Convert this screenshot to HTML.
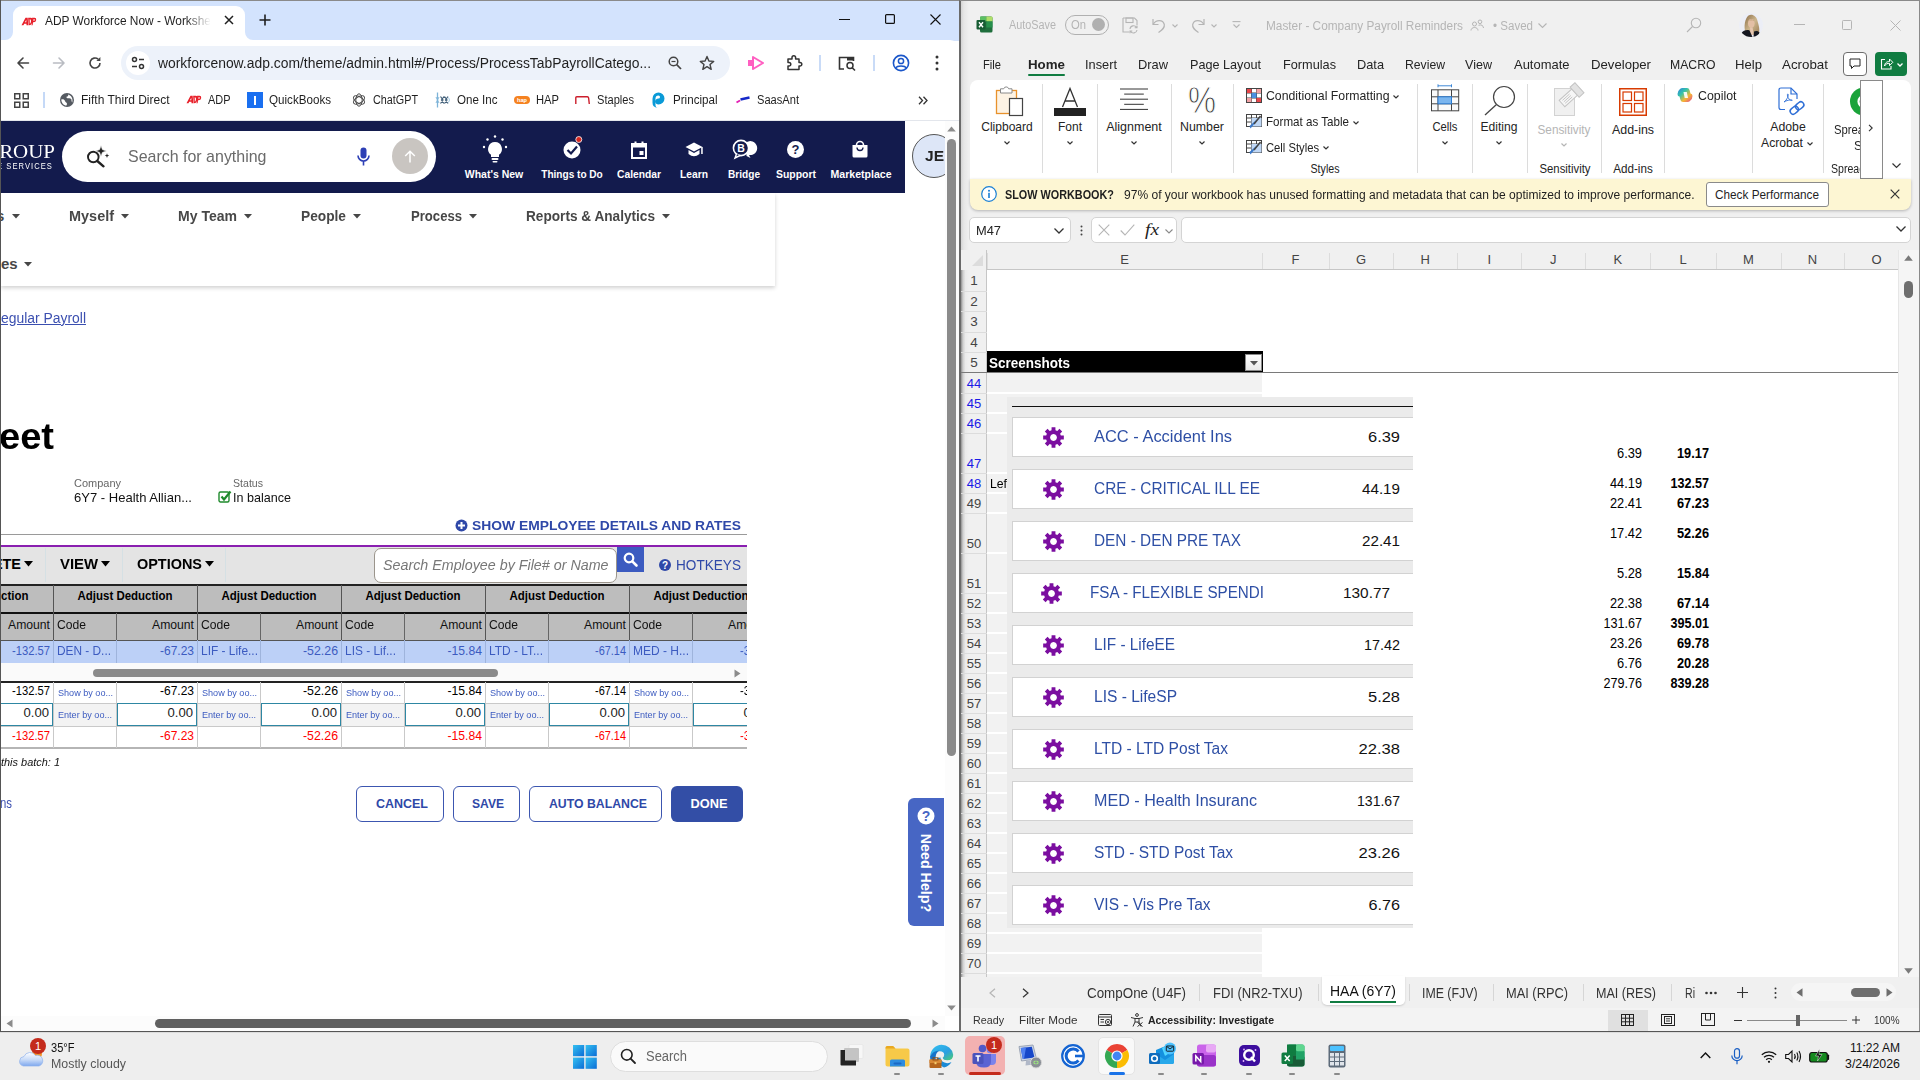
<!DOCTYPE html>
<html><head><meta charset="utf-8"><title>ADP Workforce Now - Worksheet</title>
<style>
html,body{margin:0;padding:0;}
body{width:1920px;height:1080px;overflow:hidden;position:relative;background:#fff;font-family:"Liberation Sans",sans-serif;}
.a{position:absolute;box-sizing:border-box;}
.t{position:absolute;white-space:nowrap;display:inline-block;}
svg{overflow:visible;}
</style></head><body>
<div class="a" style="left:0px;top:0px;width:960px;height:41px;background:#d3e3fd;"></div>
<div class="a" style="left:13px;top:6px;width:232px;height:35px;background:#fff;border-radius:9px 9px 0 0;"></div>
<svg class="a" style="left:5px;top:32px;" width="8" height="8" viewBox="0 0 8 8"><path d="M8 0 V8 H0 A8 8 0 0 0 8 0Z" fill="#fff"/></svg>
<svg class="a" style="left:245px;top:32px;" width="8" height="8" viewBox="0 0 8 8"><path d="M0 0 V8 H8 A8 8 0 0 1 0 0Z" fill="#fff"/></svg>
<div class="a" style="left:0px;top:40px;width:958.5px;height:44px;background:#fff;border-radius:0 9px 0 0;"></div>
<div class="a" style="left:0px;top:84px;width:960px;height:36px;background:#fff;"></div>
<div class="a" style="left:0px;top:120px;width:960px;height:1px;background:#e3e6ec;"></div>
<svg class="a" style="left:21px;top:16.6px;" width="16" height="8.8" viewBox="0 0 18 10"><path d="M0.5 9.5 L5 0.8 H7.5 L8.2 9.5 H6.2 L6.1 7.6 H3.6 L2.7 9.5 Z M4.4 6 H6 L5.9 3 Z" fill="#e8202a" fill-rule="evenodd"/><path d="M8 0.8 H11 Q13.6 0.8 13 4.5 Q12.4 9.5 9 9.5 H8.6 Z M9.8 2.6 L9.9 7.7 Q11 7.5 11.3 4.8 Q11.6 2.6 9.8 2.6Z" fill="#e8202a" fill-rule="evenodd"/><path d="M12.5 0.8 H15.2 Q17.6 0.8 17.2 3.3 Q16.8 5.9 14.3 5.9 H13.6 L13.1 9.5 H11.6 L12.4 8 Z M14.3 2.4 L13.9 4.3 Q15.4 4.4 15.6 3.3 Q15.7 2.4 14.3 2.4Z" fill="#e8202a" fill-rule="evenodd"/></svg>
<span class="t" style="left:45px;top:12.5px;font-size:12px;line-height:16px;color:#1f1f1f;transform:scaleX(0.9917);transform-origin:0 50%;-webkit-mask-image:linear-gradient(90deg,#000 85%,transparent 100%);mask-image:linear-gradient(90deg,#000 85%,transparent 100%);">ADP Workforce Now - Workshe</span>
<svg class="a" style="left:224px;top:15px;" width="10" height="10" viewBox="0 0 10 10"><path d="M1 1 L9 9 M9 1 L1 9" stroke="#1f1f1f" stroke-width="1.5" fill="none"/></svg>
<svg class="a" style="left:259px;top:14px;" width="12" height="12" viewBox="0 0 12 12"><path d="M6 0.5 V11.5 M0.5 6 H11.5" stroke="#1f1f1f" stroke-width="1.6" fill="none"/></svg>
<svg class="a" style="left:839px;top:19px;" width="11" height="1" viewBox="0 0 11 1"><rect width="11" height="1" fill="#111"/></svg>
<svg class="a" style="left:885px;top:14px;" width="10" height="10" viewBox="0 0 10 10"><rect x="0.6" y="0.6" width="8.8" height="8.8" rx="1" fill="none" stroke="#111" stroke-width="1.2"/></svg>
<svg class="a" style="left:930px;top:14px;" width="11" height="11" viewBox="0 0 11 11"><path d="M0.5 0.5 L10.5 10.5 M10.5 0.5 L0.5 10.5" stroke="#111" stroke-width="1.1" fill="none"/></svg>
<svg class="a" style="left:17px;top:57px;" width="12" height="12" viewBox="0 0 12 12"><path d="M11.5 6 H1.2 M6 1 L1 6 L6 11" stroke="#444" stroke-width="1.6" fill="none" stroke-linecap="round" stroke-linejoin="round"/></svg>
<svg class="a" style="left:53px;top:57px;" width="12" height="12" viewBox="0 0 12 12"><path d="M0.5 6 H10.8 M6 1 L11 6 L6 11" stroke="#b9bcc2" stroke-width="1.6" fill="none" stroke-linecap="round" stroke-linejoin="round"/></svg>
<svg class="a" style="left:88px;top:56px;" width="14" height="14" viewBox="0 0 14 14"><path d="M12 7 A5 5 0 1 1 10.2 3.2" stroke="#444" stroke-width="1.6" fill="none"/><path d="M12.4 1 V5 H8.4 Z" fill="#444"/></svg>
<div class="a" style="left:121px;top:46px;width:609px;height:34px;background:#edf2fa;border-radius:17px;"></div>
<div class="a" style="left:126px;top:51px;width:24px;height:24px;background:#fff;border-radius:12px;"></div>
<svg class="a" style="left:131px;top:56px;" width="14" height="14" viewBox="0 0 14 14"><circle cx="3.5" cy="3.5" r="2" fill="none" stroke="#333" stroke-width="1.5"/><path d="M8 3.5 H13" stroke="#333" stroke-width="1.5"/><circle cx="10.5" cy="10.5" r="2" fill="none" stroke="#333" stroke-width="1.5"/><path d="M1 10.5 H6" stroke="#333" stroke-width="1.5"/></svg>
<span class="t" style="left:158px;top:54.0px;font-size:14px;line-height:18px;color:#1f1f1f;transform:scaleX(0.9915);transform-origin:0 50%;">workforcenow.adp.com/theme/admin.html#/Process/ProcessTabPayrollCatego...</span>
<svg class="a" style="left:668px;top:56px;" width="14" height="14" viewBox="0 0 14 14"><circle cx="5.5" cy="5.5" r="4.3" fill="none" stroke="#444" stroke-width="1.5"/><path d="M8.7 8.7 L13 13" stroke="#444" stroke-width="1.7"/><path d="M3.5 5.5 H7.5" stroke="#444" stroke-width="1.2"/></svg>
<svg class="a" style="left:699px;top:55px;" width="16" height="16" viewBox="0 0 16 16"><path d="M8 1.5 L9.9 6 L14.7 6.4 L11 9.5 L12.2 14.3 L8 11.7 L3.8 14.3 L5 9.5 L1.3 6.4 L6.1 6 Z" fill="none" stroke="#444" stroke-width="1.4" stroke-linejoin="round"/></svg>
<svg class="a" style="left:748px;top:56px;" width="17" height="14" viewBox="0 0 17 14"><rect x="0" y="4" width="5" height="6" fill="#ff5fc1"/><path d="M5 1 L15 7 L5 13 Z" fill="none" stroke="#ff5fc1" stroke-width="2" stroke-linejoin="round"/></svg>
<svg class="a" style="left:786px;top:55px;" width="16" height="16" viewBox="0 0 16 16"><path d="M6 2.5 a1.8 1.8 0 0 1 3.6 0 V4 H13 V7.5 h1 a1.8 1.8 0 0 1 0 3.6 h-1 V14.5 H2 V11 h1 a1.8 1.8 0 0 0 0-3.6 H2 V4 H6 Z" fill="none" stroke="#333" stroke-width="1.5" stroke-linejoin="round"/></svg>
<div class="a" style="left:818.5px;top:55px;width:2px;height:16px;background:#c9dbf7;"></div>
<svg class="a" style="left:838px;top:56px;" width="18" height="15" viewBox="0 0 18 15"><path d="M6 13 H1.5 V1.5 H15.5 V5" fill="none" stroke="#333" stroke-width="1.6"/><rect x="9" y="1" width="7" height="3.5" fill="#333"/><circle cx="12" cy="9.5" r="3" fill="none" stroke="#333" stroke-width="1.5"/><path d="M14.2 11.7 L17 14.5" stroke="#333" stroke-width="1.6"/></svg>
<div class="a" style="left:873px;top:55px;width:2px;height:16px;background:#c9dbf7;"></div>
<svg class="a" style="left:892px;top:54px;" width="18" height="18" viewBox="0 0 18 18"><circle cx="9" cy="9" r="7.6" fill="none" stroke="#1a56c9" stroke-width="1.6"/><circle cx="9" cy="7" r="2.6" fill="none" stroke="#1a56c9" stroke-width="1.5"/><path d="M3.8 14 C5 11.3 13 11.3 14.2 14" fill="none" stroke="#1a56c9" stroke-width="1.5"/></svg>
<svg class="a" style="left:935px;top:55px;" width="4" height="16" viewBox="0 0 4 16"><circle cx="2" cy="2" r="1.5" fill="#333"/><circle cx="2" cy="8" r="1.5" fill="#333"/><circle cx="2" cy="14" r="1.5" fill="#333"/></svg>
<svg class="a" style="left:14px;top:93px;" width="15" height="15" viewBox="0 0 15 15"><rect x="0.75" y="0.75" width="5" height="5" fill="none" stroke="#444" stroke-width="1.5"/><rect x="9.25" y="0.75" width="5" height="5" fill="none" stroke="#444" stroke-width="1.5"/><rect x="0.75" y="9.25" width="5" height="5" fill="none" stroke="#444" stroke-width="1.5"/><rect x="9.25" y="9.25" width="5" height="5" fill="none" stroke="#444" stroke-width="1.5"/></svg>
<div class="a" style="left:43px;top:92px;width:2px;height:16px;background:#c5d9f7;"></div>
<svg class="a" style="left:60px;top:93px;" width="14" height="14" viewBox="0 0 14 14"><circle cx="7" cy="7" r="7" fill="#555a61"/><path d="M1.3 6.5 C3 6 4.5 6.5 5 8 C5.5 9.5 7 9.5 7 11 L6.5 12.6 C3.5 12.3 1.3 9.8 1.3 6.5 Z" fill="#fff"/><path d="M8.2 1.4 C8.5 3 7.5 3.5 6.5 3.8 C6 5 7.5 5.5 9 5.2 C10.5 5 12 6 11.5 8 L12.2 9.5 C13 7 12.5 3 8.2 1.4Z" fill="#fff"/></svg>
<span class="t" style="left:81px;top:92.0px;font-size:12px;line-height:16px;color:#1f1f1f;transform:scaleX(1.0004);transform-origin:0 50%;">Fifth Third Direct</span>
<svg class="a" style="left:186px;top:95.1px;" width="16" height="8.8" viewBox="0 0 18 10"><path d="M0.5 9.5 L5 0.8 H7.5 L8.2 9.5 H6.2 L6.1 7.6 H3.6 L2.7 9.5 Z M4.4 6 H6 L5.9 3 Z" fill="#e8202a" fill-rule="evenodd"/><path d="M8 0.8 H11 Q13.6 0.8 13 4.5 Q12.4 9.5 9 9.5 H8.6 Z M9.8 2.6 L9.9 7.7 Q11 7.5 11.3 4.8 Q11.6 2.6 9.8 2.6Z" fill="#e8202a" fill-rule="evenodd"/><path d="M12.5 0.8 H15.2 Q17.6 0.8 17.2 3.3 Q16.8 5.9 14.3 5.9 H13.6 L13.1 9.5 H11.6 L12.4 8 Z M14.3 2.4 L13.9 4.3 Q15.4 4.4 15.6 3.3 Q15.7 2.4 14.3 2.4Z" fill="#e8202a" fill-rule="evenodd"/></svg>
<span class="t" style="left:208px;top:92.0px;font-size:12px;line-height:16px;color:#1f1f1f;transform:scaleX(0.9114);transform-origin:0 50%;">ADP</span>
<div class="a" style="left:247px;top:92px;width:15.5px;height:16px;background:#1a6ff0;"></div>
<div class="a" style="left:253.5px;top:95.5px;width:2.5px;height:9px;background:#fff;"></div>
<span class="t" style="left:269px;top:92.0px;font-size:12px;line-height:16px;color:#1f1f1f;transform:scaleX(0.9683);transform-origin:0 50%;">QuickBooks</span>
<svg class="a" style="left:352px;top:93px;" width="14" height="14" viewBox="0 0 14 14"><g fill="none" stroke="#4a4a4a" stroke-width="1"><ellipse cx="7" cy="7" rx="3.2" ry="6.2"/><ellipse cx="7" cy="7" rx="3.2" ry="6.2" transform="rotate(60 7 7)"/><ellipse cx="7" cy="7" rx="3.2" ry="6.2" transform="rotate(120 7 7)"/></g></svg>
<span class="t" style="left:373px;top:92.0px;font-size:12px;line-height:16px;color:#1f1f1f;transform:scaleX(0.8997);transform-origin:0 50%;">ChatGPT</span>
<svg class="a" style="left:435px;top:92px;" width="15" height="16" viewBox="0 0 15 16"><path d="M2.5 0.5 V15.5" stroke="#7db3d8" stroke-width="1.3" fill="none"/><path d="M1 5 L2.5 8 L1 11 M4 5 L2.5 8 L4 11" stroke="#7db3d8" stroke-width="0.9" fill="none"/><path d="M5.5 4.5 L8 8 L5.5 11.5 M9 4.5 L6.5 8 L9 11.5 M9.5 4.5 L12 8 L9.5 11.5 M13 4.5 L10.5 8 L13 11.5" stroke="#44617a" stroke-width="1.2" fill="none"/><path d="M13.5 5.5 L14.5 8 L13.5 10.5" stroke="#9cc6e3" stroke-width="0.9" fill="none"/></svg>
<span class="t" style="left:457px;top:92.0px;font-size:12px;line-height:16px;color:#1f1f1f;transform:scaleX(0.9636);transform-origin:0 50%;">One Inc</span>
<div class="a" style="left:514px;top:96px;width:16px;height:8px;background:#f58220;border-radius:4px;"></div>
<span class="t" style="left:522px;top:96.0px;font-size:6px;line-height:8px;color:#fff;font-weight:700;transform:translateX(-50%) scaleX(0.9370);transform-origin:50% 50%;">hap</span>
<span class="t" style="left:536px;top:92.0px;font-size:12px;line-height:16px;color:#1f1f1f;transform:scaleX(0.9316);transform-origin:0 50%;">HAP</span>
<svg class="a" style="left:575px;top:96px;" width="15" height="8" viewBox="0 0 15 8"><path d="M0.8 8 V1.8 Q0.8 0.8 1.8 0.8 H12.4 Q13.4 0.8 13.6 1.8 L14.3 8" fill="none" stroke="#cc1f2d" stroke-width="1.4"/></svg>
<span class="t" style="left:597px;top:92.0px;font-size:12px;line-height:16px;color:#1f1f1f;transform:scaleX(0.9243);transform-origin:0 50%;">Staples</span>
<svg class="a" style="left:652px;top:92px;" width="13" height="16" viewBox="0 0 13 16"><path d="M6.5 0.5 a6 6 0 0 1 0 12 a3 3 0 0 1 0 -6 a1.5 1.5 0 0 0 0 -3 a3 3 0 0 0 -3 3 v7 q0 2 2 2.2 q-5 -0.5 -5 -5 v-4 a6 6 0 0 1 6 -6.2z" fill="#0a9ad7"/></svg>
<span class="t" style="left:673px;top:92.0px;font-size:12px;line-height:16px;color:#1f1f1f;transform:scaleX(0.9667);transform-origin:0 50%;">Principal</span>
<svg class="a" style="left:736px;top:96px;" width="14" height="8" viewBox="0 0 14 8"><path d="M0.5 6.5 L4 4.5" stroke="#e31fb4" stroke-width="2"/><path d="M4.5 3.5 L13.5 1.5" stroke="#1528c9" stroke-width="2.4"/></svg>
<span class="t" style="left:757px;top:92.0px;font-size:12px;line-height:16px;color:#1f1f1f;transform:scaleX(0.9256);transform-origin:0 50%;">SaasAnt</span>
<svg class="a" style="left:918px;top:96px;" width="10" height="9" viewBox="0 0 10 9"><path d="M1 0.8 L4.5 4.5 L1 8.2 M5.5 0.8 L9 4.5 L5.5 8.2" stroke="#333" stroke-width="1.3" fill="none"/></svg>
<div class="a" style="left:1px;top:121px;width:904px;height:72px;background:#131b4d;"></div>
<div class="a" style="left:905px;top:121px;width:40px;height:72px;background:#fff;overflow:hidden;">
<div class="a" style="left:6.5px;top:13px;width:44px;height:44px;border-radius:22px;background:#dde6f7;border:1px solid #555;"></div>
</div>
<span class="t" style="left:924.5px;top:147.0px;font-size:14px;line-height:18px;color:#222;font-weight:700;transform:scaleX(1.1095);transform-origin:0 50%;">JE</span>
<span class="t" style="left:-16px;top:138.5px;font-size:19px;line-height:25px;color:#fff;font-family:'Liberation Serif',serif;transform:scaleX(1.1024);transform-origin:0 50%;">GROUP</span>
<span class="t" style="left:-3px;top:161.0px;font-size:8.5px;line-height:11px;color:#fff;transform:scaleX(0.8907);transform-origin:0 50%;letter-spacing:1.2px;">E SERVICES</span>
<div class="a" style="left:62px;top:131px;width:374px;height:51px;background:#fff;border-radius:26px;"></div>
<svg class="a" style="left:84px;top:143px;" width="26" height="26" viewBox="0 0 26 26"><circle cx="9.3" cy="14" r="5.3" fill="none" stroke="#222" stroke-width="1.9"/><path d="M13.3 18 L19.5 23.3" stroke="#222" stroke-width="2.4" stroke-linecap="round"/><path d="M17 2.5 L18.4 6.6 L22.5 8 L18.4 9.4 L17 13.5 L15.6 9.4 L11.5 8 L15.6 6.6 Z" fill="#222" stroke="#fff" stroke-width="0.6"/><path d="M23 10.3 L23.6 12 L25.3 12.6 L23.6 13.2 L23 14.9 L22.4 13.2 L20.7 12.6 L22.4 12Z" fill="#222"/></svg>
<span class="t" style="left:127.5px;top:146.0px;font-size:17px;line-height:22px;color:#6a6a6a;transform:scaleX(0.9395);transform-origin:0 50%;">Search for anything</span>
<svg class="a" style="left:357px;top:147px;" width="13" height="20" viewBox="0 0 13 20"><rect x="3.5" y="0.5" width="6" height="11" rx="3" fill="#2d3fb5"/><path d="M1 8.5 a5.5 5.5 0 0 0 11 0" fill="none" stroke="#2d3fb5" stroke-width="1.6"/><path d="M6.5 14 V18.5" stroke="#2d3fb5" stroke-width="1.6"/></svg>
<div class="a" style="left:392px;top:138px;width:36px;height:36px;background:#c9c5c1;border-radius:18px;"></div>
<svg class="a" style="left:404px;top:150px;" width="12" height="13" viewBox="0 0 12 13"><path d="M6 12.5 V1.5 M1.2 6 L6 1.2 L10.8 6" stroke="#fff" stroke-width="1.5" fill="none"/></svg>
<svg class="a" style="left:481px;top:134px;" width="28" height="32" viewBox="0 0 28 32"><path d="M14 8 a7 7 0 0 1 4 12.7 V23 H10 V20.7 A7 7 0 0 1 14 8Z" fill="#fff"/><rect x="10.5" y="24" width="7" height="2" rx="1" fill="#fff"/><rect x="11.5" y="27" width="5" height="1.6" rx="0.8" fill="#fff"/><g fill="#fff"><circle cx="14" cy="2.5" r="1.2"/><circle cx="6.5" cy="5.5" r="1.2"/><circle cx="21.5" cy="5.5" r="1.2"/><circle cx="3" cy="13" r="1.2"/><circle cx="25" cy="13" r="1.2"/></g></svg>
<span class="t" style="left:494px;top:167.0px;font-size:11px;line-height:14px;color:#fff;font-weight:700;transform:translateX(-50%) scaleX(0.9544);transform-origin:50% 50%;">What&#39;s New</span>
<svg class="a" style="left:563px;top:135px;" width="24" height="24" viewBox="0 0 24 24"><circle cx="9" cy="15" r="8.5" fill="#fff"/><path d="M4.5 15 L8 18.5 L14 11.5" stroke="#131b4d" stroke-width="2.2" fill="none"/><circle cx="15.8" cy="4.5" r="3" fill="#d8281f" stroke="#fff" stroke-width="0.8"/></svg>
<span class="t" style="left:572px;top:167.0px;font-size:11px;line-height:14px;color:#fff;font-weight:700;transform:translateX(-50%) scaleX(0.9149);transform-origin:50% 50%;">Things to Do</span>
<svg class="a" style="left:631px;top:141px;" width="16" height="18" viewBox="0 0 16 18"><path d="M1 3 H15 V17 H1Z" fill="none" stroke="#fff" stroke-width="2"/><rect x="1" y="3" width="14" height="3.5" fill="#fff"/><rect x="3.5" y="0.5" width="2" height="3" fill="#fff"/><rect x="10.5" y="0.5" width="2" height="3" fill="#fff"/><rect x="8.5" y="10" width="4" height="4" fill="#fff"/></svg>
<span class="t" style="left:639px;top:167.0px;font-size:11px;line-height:14px;color:#fff;font-weight:700;transform:translateX(-50%) scaleX(0.9346);transform-origin:50% 50%;">Calendar</span>
<svg class="a" style="left:685px;top:142px;" width="18" height="16" viewBox="0 0 18 16"><path d="M9 0.5 L0.5 5 L9 9.5 L17.5 5Z" fill="#fff"/><path d="M3.5 8 V12 Q9 16.5 14.5 12 V8 L9 11Z" fill="#fff"/><rect x="16.2" y="5" width="1.5" height="7" fill="#fff"/></svg>
<span class="t" style="left:693.5px;top:167.0px;font-size:11px;line-height:14px;color:#fff;font-weight:700;transform:translateX(-50%) scaleX(0.9343);transform-origin:50% 50%;">Learn</span>
<svg class="a" style="left:732px;top:139px;" width="24" height="20" viewBox="0 0 24 20"><path d="M14 3.5 a7 7 0 1 1 3 12.5 l1.5 3 l-4 -2" fill="#fff"/><circle cx="9" cy="9" r="7.6" fill="#131b4d" stroke="#fff" stroke-width="1.6"/><path d="M4.5 15 L3 19 L8 16.5" fill="#131b4d" stroke="#fff" stroke-width="1.4"/><text x="9" y="13" font-size="10.5" font-weight="700" fill="#fff" text-anchor="middle" font-family="Liberation Sans,sans-serif">B</text></svg>
<span class="t" style="left:744px;top:167.0px;font-size:11px;line-height:14px;color:#fff;font-weight:700;transform:translateX(-50%) scaleX(0.9184);transform-origin:50% 50%;">Bridge</span>
<svg class="a" style="left:787px;top:141px;" width="17" height="17" viewBox="0 0 17 17"><circle cx="8.5" cy="8.5" r="8.5" fill="#fff"/><text x="8.5" y="13" font-size="13" font-weight="700" fill="#131b4d" text-anchor="middle" font-family="Liberation Sans,sans-serif">?</text></svg>
<span class="t" style="left:796px;top:167.0px;font-size:11px;line-height:14px;color:#fff;font-weight:700;transform:translateX(-50%) scaleX(0.9485);transform-origin:50% 50%;">Support</span>
<svg class="a" style="left:852px;top:140px;" width="16" height="18" viewBox="0 0 16 18"><path d="M0.5 5 H15.5 V16 Q15.5 17.5 14 17.5 H2 Q0.5 17.5 0.5 16Z" fill="#fff"/><path d="M4.5 5 a3.5 3.5 0 0 1 7 0" fill="none" stroke="#fff" stroke-width="1.6"/><path d="M5 7.5 a3 3 0 0 0 6 0" fill="none" stroke="#131b4d" stroke-width="1.3"/></svg>
<span class="t" style="left:860.5px;top:167.0px;font-size:11px;line-height:14px;color:#fff;font-weight:700;transform:translateX(-50%) scaleX(0.9592);transform-origin:50% 50%;">Marketplace</span>
<div class="a" style="left:945px;top:121px;width:14px;height:895px;background:#fcfcfc;"></div>
<svg class="a" style="left:947px;top:126px;" width="9" height="6" viewBox="0 0 9 6"><path d="M4.5 0.5 L8.8 5.5 H0.2Z" fill="#8b8b8b"/></svg>
<div class="a" style="left:947px;top:139px;width:9px;height:617px;background:#8b8b8b;border-radius:4.5px;"></div>
<svg class="a" style="left:947px;top:1005px;" width="9" height="6" viewBox="0 0 9 6"><path d="M4.5 5.5 L8.8 0.5 H0.2Z" fill="#8b8b8b"/></svg>
<div class="a" style="left:1px;top:193px;width:774px;height:93px;background:#fff;box-shadow:0 2px 4px rgba(0,0,0,0.18);"></div>
<span class="t" style="left:-4px;top:206.0px;font-size:15px;line-height:20px;color:#474747;font-weight:700;">s</span>
<svg class="a" style="left:12px;top:214px;" width="8" height="5" viewBox="0 0 8 5"><path d="M0 0 H8 L4 4.5Z" fill="#474747"/></svg>
<span class="t" style="left:69px;top:206.0px;font-size:15px;line-height:20px;color:#474747;font-weight:700;transform:scaleX(0.9639);transform-origin:0 50%;">Myself</span>
<svg class="a" style="left:121px;top:214px;" width="8" height="5" viewBox="0 0 8 5"><path d="M0 0 H8 L4 4.5Z" fill="#474747"/></svg>
<span class="t" style="left:177.5px;top:206.0px;font-size:15px;line-height:20px;color:#474747;font-weight:700;transform:scaleX(0.9353);transform-origin:0 50%;">My Team</span>
<svg class="a" style="left:243.5px;top:214px;" width="8" height="5" viewBox="0 0 8 5"><path d="M0 0 H8 L4 4.5Z" fill="#474747"/></svg>
<span class="t" style="left:301px;top:206.0px;font-size:15px;line-height:20px;color:#474747;font-weight:700;transform:scaleX(0.9149);transform-origin:0 50%;">People</span>
<svg class="a" style="left:353px;top:214px;" width="8" height="5" viewBox="0 0 8 5"><path d="M0 0 H8 L4 4.5Z" fill="#474747"/></svg>
<span class="t" style="left:411px;top:206.0px;font-size:15px;line-height:20px;color:#474747;font-weight:700;transform:scaleX(0.8737);transform-origin:0 50%;">Process</span>
<svg class="a" style="left:469px;top:214px;" width="8" height="5" viewBox="0 0 8 5"><path d="M0 0 H8 L4 4.5Z" fill="#474747"/></svg>
<span class="t" style="left:526px;top:206.0px;font-size:15px;line-height:20px;color:#474747;font-weight:700;transform:scaleX(0.9086);transform-origin:0 50%;">Reports &amp; Analytics</span>
<svg class="a" style="left:662px;top:214px;" width="8" height="5" viewBox="0 0 8 5"><path d="M0 0 H8 L4 4.5Z" fill="#474747"/></svg>
<span class="t" style="left:1px;top:254.0px;font-size:15px;line-height:20px;color:#474747;font-weight:700;">es</span>
<svg class="a" style="left:24px;top:262px;" width="8" height="5" viewBox="0 0 8 5"><path d="M0 0 H8 L4 4.5Z" fill="#474747"/></svg>
<span class="t" style="left:1px;top:309.0px;font-size:14px;line-height:18px;color:#3b4fb0;transform:scaleX(0.9929);transform-origin:0 50%;text-decoration:underline;">egular Payroll</span>
<span class="t" style="left:-1px;top:412.0px;font-size:37px;line-height:50px;color:#000;font-weight:700;transform:scaleX(1.0283);transform-origin:0 50%;">eet</span>
<span class="t" style="left:74px;top:476.0px;font-size:11px;line-height:14px;color:#666;transform:scaleX(0.9983);transform-origin:0 50%;">Company</span>
<span class="t" style="left:74px;top:489.0px;font-size:13px;line-height:17px;color:#111;transform:scaleX(1.0017);transform-origin:0 50%;">6Y7 - Health Allian...</span>
<span class="t" style="left:232.5px;top:476.0px;font-size:11px;line-height:14px;color:#666;transform:scaleX(0.9619);transform-origin:0 50%;">Status</span>
<span class="t" style="left:232.5px;top:489.0px;font-size:13px;line-height:17px;color:#111;transform:scaleX(0.9667);transform-origin:0 50%;">In balance</span>
<svg class="a" style="left:218px;top:490px;" width="14" height="13" viewBox="0 0 14 13"><rect x="1" y="2" width="10" height="10" rx="1.5" fill="#fff" stroke="#1f8a2c" stroke-width="1.4"/><path d="M3.5 6.5 L6 9.5 L12.5 1.5" stroke="#1f8a2c" stroke-width="2.2" fill="none"/></svg>
<svg class="a" style="left:455px;top:519px;" width="13" height="13" viewBox="0 0 13 13"><circle cx="6.5" cy="6.5" r="6" fill="#2f48a8"/><path d="M6.5 3 V10 M3 6.5 H10" stroke="#fff" stroke-width="2"/></svg>
<span class="t" style="left:472px;top:517.0px;font-size:13px;line-height:17px;color:#2f48a8;font-weight:700;transform:scaleX(1.0651);transform-origin:0 50%;">SHOW EMPLOYEE DETAILS AND RATES</span>
<div class="a" style="left:1px;top:534px;width:746px;height:1px;background:#9a9a9a;"></div>
<div class="a" style="left:1px;top:545px;width:746px;height:2px;background:#8a1fb0;"></div>
<div class="a" style="left:1px;top:547px;width:746px;height:37px;background:#e4e4e4;"></div>
<div class="a" style="left:45px;top:548px;width:1px;height:34px;background:#d5e0e4;"></div>
<div class="a" style="left:122px;top:548px;width:1px;height:34px;background:#d5e0e4;"></div>
<div class="a" style="left:225px;top:548px;width:1px;height:34px;background:#d5e0e4;"></div>
<span class="t" style="left:20.5px;top:554.0px;font-size:15px;line-height:20px;color:#000;font-weight:700;transform:translateX(-100%) scaleX(0.9630);transform-origin:100% 50%;">DELETE</span>
<svg class="a" style="left:23.5px;top:561px;" width="9" height="6" viewBox="0 0 9 6"><path d="M0 0 H9 L4.5 5.5Z" fill="#000"/></svg>
<span class="t" style="left:60px;top:554.0px;font-size:15px;line-height:20px;color:#000;font-weight:700;transform:scaleX(0.9910);transform-origin:0 50%;">VIEW</span>
<svg class="a" style="left:101px;top:561px;" width="9" height="6" viewBox="0 0 9 6"><path d="M0 0 H9 L4.5 5.5Z" fill="#000"/></svg>
<span class="t" style="left:137px;top:554.0px;font-size:15px;line-height:20px;color:#000;font-weight:700;transform:scaleX(0.9627);transform-origin:0 50%;">OPTIONS</span>
<svg class="a" style="left:205px;top:561px;" width="9" height="6" viewBox="0 0 9 6"><path d="M0 0 H9 L4.5 5.5Z" fill="#000"/></svg>
<div class="a" style="left:374px;top:548px;width:243px;height:35px;background:#fff;border:1px solid #9b958c;border-radius:7px;"></div>
<span class="t" style="left:382.5px;top:555.0px;font-size:15px;line-height:20px;color:#777;font-style:italic;transform:scaleX(0.9524);transform-origin:0 50%;">Search Employee by File# or Name</span>
<div class="a" style="left:617px;top:547px;width:27px;height:25px;background:#3c5bc0;"></div>
<svg class="a" style="left:623px;top:552px;" width="15" height="15" viewBox="0 0 15 15"><circle cx="6" cy="6" r="4.3" fill="none" stroke="#fff" stroke-width="2.2"/><path d="M9.3 9.3 L13.5 13.5" stroke="#fff" stroke-width="2.6" stroke-linecap="round"/></svg>
<svg class="a" style="left:659px;top:559px;" width="12" height="12" viewBox="0 0 12 12"><circle cx="6" cy="6" r="6" fill="#2f48a8"/><text x="6" y="9.6" font-size="10" font-weight="700" fill="#fff" text-anchor="middle" font-family="Liberation Sans,sans-serif">?</text></svg>
<span class="t" style="left:676px;top:555.0px;font-size:15px;line-height:20px;color:#2f48a8;transform:scaleX(0.9067);transform-origin:0 50%;">HOTKEYS</span>
<div class="a" style="left:1px;top:584px;width:746px;height:165px;overflow:hidden;">
<div class="a" style="left:-1px;top:0px;width:748px;height:56px;background:#bdbdbd;"></div>
<div class="a" style="left:-1px;top:0px;width:748px;height:1.5px;background:#222;"></div>
<div class="a" style="left:-1px;top:27.5px;width:748px;height:2px;background:#111;"></div>
<div class="a" style="left:-1px;top:55.5px;width:748px;height:1px;background:#555;"></div>
<div class="a" style="left:-1px;top:56.5px;width:748px;height:22.5px;background:#bcd0f7;"></div>
<div class="a" style="left:-1px;top:79px;width:748px;height:18px;background:#fafafa;"></div>
<div class="a" style="left:-1px;top:97px;width:748px;height:1.5px;background:#222;"></div>
<div class="a" style="left:-1px;top:98.5px;width:748px;height:65px;background:#fff;"></div>
<div class="a" style="left:-1px;top:118.5px;width:748px;height:1px;background:#c9c9c9;"></div>
<div class="a" style="left:-1px;top:141.5px;width:748px;height:1px;background:#c9c9c9;"></div>
<div class="a" style="left:-1px;top:163px;width:748px;height:1.5px;background:#b5b5b5;"></div>
<div class="a" style="left:92px;top:85px;width:405px;height:8px;background:#8b8b8b;border-radius:4px;"></div>
<svg class="a" style="left:733px;top:85px" width="7" height="9" viewBox="0 0 7 9"><path d="M0.5 0.5 L6.5 4.5 L0.5 8.5Z" fill="#8b8b8b"/></svg>
<div class="a" style="left:-92px;top:1px;width:1px;height:55px;background:#555;"></div>
<div class="a" style="left:-29px;top:29px;width:1px;height:27px;background:#666;"></div>
<div class="a" style="left:-92px;top:56px;width:1px;height:23px;background:#9fb4dc;"></div>
<div class="a" style="left:-29px;top:56px;width:1px;height:23px;background:#9fb4dc;"></div>
<div class="a" style="left:-92px;top:98px;width:1px;height:66px;background:#c9c9c9;"></div>
<div class="a" style="left:-29px;top:98px;width:1px;height:66px;background:#c9c9c9;"></div>
<div class="a" style="left:-91px;top:119.5px;width:62px;height:22px;background:#f3f3f3;"></div>
<div class="a" style="left:-28px;top:119px;width:80px;height:23px;background:#fff;border:1.5px solid #2e87a3;box-sizing:border-box;"></div>
<div class="a" style="left:52px;top:1px;width:1px;height:55px;background:#555;"></div>
<div class="a" style="left:115px;top:29px;width:1px;height:27px;background:#666;"></div>
<div class="a" style="left:52px;top:56px;width:1px;height:23px;background:#9fb4dc;"></div>
<div class="a" style="left:115px;top:56px;width:1px;height:23px;background:#9fb4dc;"></div>
<div class="a" style="left:52px;top:98px;width:1px;height:66px;background:#c9c9c9;"></div>
<div class="a" style="left:115px;top:98px;width:1px;height:66px;background:#c9c9c9;"></div>
<div class="a" style="left:53px;top:119.5px;width:62px;height:22px;background:#f3f3f3;"></div>
<div class="a" style="left:116px;top:119px;width:80px;height:23px;background:#fff;border:1.5px solid #2e87a3;box-sizing:border-box;"></div>
<div class="a" style="left:196px;top:1px;width:1px;height:55px;background:#555;"></div>
<div class="a" style="left:259px;top:29px;width:1px;height:27px;background:#666;"></div>
<div class="a" style="left:196px;top:56px;width:1px;height:23px;background:#9fb4dc;"></div>
<div class="a" style="left:259px;top:56px;width:1px;height:23px;background:#9fb4dc;"></div>
<div class="a" style="left:196px;top:98px;width:1px;height:66px;background:#c9c9c9;"></div>
<div class="a" style="left:259px;top:98px;width:1px;height:66px;background:#c9c9c9;"></div>
<div class="a" style="left:197px;top:119.5px;width:62px;height:22px;background:#f3f3f3;"></div>
<div class="a" style="left:260px;top:119px;width:80px;height:23px;background:#fff;border:1.5px solid #2e87a3;box-sizing:border-box;"></div>
<div class="a" style="left:340px;top:1px;width:1px;height:55px;background:#555;"></div>
<div class="a" style="left:403px;top:29px;width:1px;height:27px;background:#666;"></div>
<div class="a" style="left:340px;top:56px;width:1px;height:23px;background:#9fb4dc;"></div>
<div class="a" style="left:403px;top:56px;width:1px;height:23px;background:#9fb4dc;"></div>
<div class="a" style="left:340px;top:98px;width:1px;height:66px;background:#c9c9c9;"></div>
<div class="a" style="left:403px;top:98px;width:1px;height:66px;background:#c9c9c9;"></div>
<div class="a" style="left:341px;top:119.5px;width:62px;height:22px;background:#f3f3f3;"></div>
<div class="a" style="left:404px;top:119px;width:80px;height:23px;background:#fff;border:1.5px solid #2e87a3;box-sizing:border-box;"></div>
<div class="a" style="left:484px;top:1px;width:1px;height:55px;background:#555;"></div>
<div class="a" style="left:547px;top:29px;width:1px;height:27px;background:#666;"></div>
<div class="a" style="left:484px;top:56px;width:1px;height:23px;background:#9fb4dc;"></div>
<div class="a" style="left:547px;top:56px;width:1px;height:23px;background:#9fb4dc;"></div>
<div class="a" style="left:484px;top:98px;width:1px;height:66px;background:#c9c9c9;"></div>
<div class="a" style="left:547px;top:98px;width:1px;height:66px;background:#c9c9c9;"></div>
<div class="a" style="left:485px;top:119.5px;width:62px;height:22px;background:#f3f3f3;"></div>
<div class="a" style="left:548px;top:119px;width:80px;height:23px;background:#fff;border:1.5px solid #2e87a3;box-sizing:border-box;"></div>
<div class="a" style="left:628px;top:1px;width:1px;height:55px;background:#555;"></div>
<div class="a" style="left:691px;top:29px;width:1px;height:27px;background:#666;"></div>
<div class="a" style="left:628px;top:56px;width:1px;height:23px;background:#9fb4dc;"></div>
<div class="a" style="left:691px;top:56px;width:1px;height:23px;background:#9fb4dc;"></div>
<div class="a" style="left:628px;top:98px;width:1px;height:66px;background:#c9c9c9;"></div>
<div class="a" style="left:691px;top:98px;width:1px;height:66px;background:#c9c9c9;"></div>
<div class="a" style="left:629px;top:119.5px;width:62px;height:22px;background:#f3f3f3;"></div>
<div class="a" style="left:692px;top:119px;width:80px;height:23px;background:#fff;border:1.5px solid #2e87a3;box-sizing:border-box;"></div>
</div>
<div class="a" style="left:1px;top:584px;width:746px;height:165px;overflow:hidden;">
<span class="t" style="left:-20px;top:2.5px;font-size:13px;line-height:17px;color:#000;font-weight:700;transform:translateX(-50%) scaleX(0.8828);transform-origin:50% 50%;">Adjust Deduction</span>
<span class="t" style="left:-88.5px;top:31.5px;font-size:13px;line-height:17px;color:#111;transform:scaleX(0.9331);transform-origin:0 50%;">Code</span>
<span class="t" style="left:49px;top:31.5px;font-size:13px;line-height:17px;color:#111;transform:translateX(-100%) scaleX(0.9372);transform-origin:100% 50%;">Amount</span>
<span class="t" style="left:-88px;top:58.0px;font-size:13.5px;line-height:18px;color:#3c5bc0;transform:scaleX(0.8941);transform-origin:0 50%;">CRE - C...</span>
<span class="t" style="left:49px;top:58.0px;font-size:13.5px;line-height:18px;color:#3c5bc0;transform:translateX(-100%) scaleX(0.8298);transform-origin:100% 50%;">-132.57</span>
<span class="t" style="left:49px;top:98.0px;font-size:13.5px;line-height:18px;color:#000;transform:translateX(-100%) scaleX(0.8298);transform-origin:100% 50%;">-132.57</span>
<span class="t" style="left:49px;top:143.0px;font-size:13.5px;line-height:18px;color:#ff0000;transform:translateX(-100%) scaleX(0.8298);transform-origin:100% 50%;">-132.57</span>
<span class="t" style="left:-87.5px;top:103.0px;font-size:9.5px;line-height:12px;color:#3c5bc0;transform:scaleX(0.9555);transform-origin:0 50%;">Show by oo...</span>
<span class="t" style="left:-87.5px;top:125.0px;font-size:9.5px;line-height:12px;color:#3c5bc0;transform:scaleX(0.9555);transform-origin:0 50%;">Enter by oo...</span>
<span class="t" style="left:47.5px;top:120.0px;font-size:13.5px;line-height:18px;color:#222;transform:translateX(-100%) scaleX(0.9703);transform-origin:100% 50%;">0.00</span>
<span class="t" style="left:124px;top:2.5px;font-size:13px;line-height:17px;color:#000;font-weight:700;transform:translateX(-50%) scaleX(0.8828);transform-origin:50% 50%;">Adjust Deduction</span>
<span class="t" style="left:55.5px;top:31.5px;font-size:13px;line-height:17px;color:#111;transform:scaleX(0.9331);transform-origin:0 50%;">Code</span>
<span class="t" style="left:193px;top:31.5px;font-size:13px;line-height:17px;color:#111;transform:translateX(-100%) scaleX(0.9372);transform-origin:100% 50%;">Amount</span>
<span class="t" style="left:56px;top:58.0px;font-size:13.5px;line-height:18px;color:#3c5bc0;transform:scaleX(0.8778);transform-origin:0 50%;">DEN - D...</span>
<span class="t" style="left:193px;top:58.0px;font-size:13.5px;line-height:18px;color:#3c5bc0;transform:translateX(-100%) scaleX(0.8882);transform-origin:100% 50%;">-67.23</span>
<span class="t" style="left:193px;top:98.0px;font-size:13.5px;line-height:18px;color:#000;transform:translateX(-100%) scaleX(0.8882);transform-origin:100% 50%;">-67.23</span>
<span class="t" style="left:193px;top:143.0px;font-size:13.5px;line-height:18px;color:#ff0000;transform:translateX(-100%) scaleX(0.8882);transform-origin:100% 50%;">-67.23</span>
<span class="t" style="left:56.5px;top:103.0px;font-size:9.5px;line-height:12px;color:#3c5bc0;transform:scaleX(0.9555);transform-origin:0 50%;">Show by oo...</span>
<span class="t" style="left:56.5px;top:125.0px;font-size:9.5px;line-height:12px;color:#3c5bc0;transform:scaleX(0.9555);transform-origin:0 50%;">Enter by oo...</span>
<span class="t" style="left:191.5px;top:120.0px;font-size:13.5px;line-height:18px;color:#222;transform:translateX(-100%) scaleX(0.9703);transform-origin:100% 50%;">0.00</span>
<span class="t" style="left:268px;top:2.5px;font-size:13px;line-height:17px;color:#000;font-weight:700;transform:translateX(-50%) scaleX(0.8828);transform-origin:50% 50%;">Adjust Deduction</span>
<span class="t" style="left:199.5px;top:31.5px;font-size:13px;line-height:17px;color:#111;transform:scaleX(0.9331);transform-origin:0 50%;">Code</span>
<span class="t" style="left:337px;top:31.5px;font-size:13px;line-height:17px;color:#111;transform:translateX(-100%) scaleX(0.9372);transform-origin:100% 50%;">Amount</span>
<span class="t" style="left:200px;top:58.0px;font-size:13.5px;line-height:18px;color:#3c5bc0;transform:scaleX(0.8833);transform-origin:0 50%;">LIF - Life...</span>
<span class="t" style="left:337px;top:58.0px;font-size:13.5px;line-height:18px;color:#3c5bc0;transform:translateX(-100%) scaleX(0.9143);transform-origin:100% 50%;">-52.26</span>
<span class="t" style="left:337px;top:98.0px;font-size:13.5px;line-height:18px;color:#000;transform:translateX(-100%) scaleX(0.9143);transform-origin:100% 50%;">-52.26</span>
<span class="t" style="left:337px;top:143.0px;font-size:13.5px;line-height:18px;color:#ff0000;transform:translateX(-100%) scaleX(0.9143);transform-origin:100% 50%;">-52.26</span>
<span class="t" style="left:200.5px;top:103.0px;font-size:9.5px;line-height:12px;color:#3c5bc0;transform:scaleX(0.9555);transform-origin:0 50%;">Show by oo...</span>
<span class="t" style="left:200.5px;top:125.0px;font-size:9.5px;line-height:12px;color:#3c5bc0;transform:scaleX(0.9555);transform-origin:0 50%;">Enter by oo...</span>
<span class="t" style="left:335.5px;top:120.0px;font-size:13.5px;line-height:18px;color:#222;transform:translateX(-100%) scaleX(0.9703);transform-origin:100% 50%;">0.00</span>
<span class="t" style="left:412px;top:2.5px;font-size:13px;line-height:17px;color:#000;font-weight:700;transform:translateX(-50%) scaleX(0.8828);transform-origin:50% 50%;">Adjust Deduction</span>
<span class="t" style="left:343.5px;top:31.5px;font-size:13px;line-height:17px;color:#111;transform:scaleX(0.9331);transform-origin:0 50%;">Code</span>
<span class="t" style="left:481px;top:31.5px;font-size:13px;line-height:17px;color:#111;transform:translateX(-100%) scaleX(0.9372);transform-origin:100% 50%;">Amount</span>
<span class="t" style="left:344px;top:58.0px;font-size:13.5px;line-height:18px;color:#3c5bc0;transform:scaleX(0.8826);transform-origin:0 50%;">LIS - Lif...</span>
<span class="t" style="left:481px;top:58.0px;font-size:13.5px;line-height:18px;color:#3c5bc0;transform:translateX(-100%) scaleX(0.9012);transform-origin:100% 50%;">-15.84</span>
<span class="t" style="left:481px;top:98.0px;font-size:13.5px;line-height:18px;color:#000;transform:translateX(-100%) scaleX(0.9012);transform-origin:100% 50%;">-15.84</span>
<span class="t" style="left:481px;top:143.0px;font-size:13.5px;line-height:18px;color:#ff0000;transform:translateX(-100%) scaleX(0.9012);transform-origin:100% 50%;">-15.84</span>
<span class="t" style="left:344.5px;top:103.0px;font-size:9.5px;line-height:12px;color:#3c5bc0;transform:scaleX(0.9555);transform-origin:0 50%;">Show by oo...</span>
<span class="t" style="left:344.5px;top:125.0px;font-size:9.5px;line-height:12px;color:#3c5bc0;transform:scaleX(0.9555);transform-origin:0 50%;">Enter by oo...</span>
<span class="t" style="left:479.5px;top:120.0px;font-size:13.5px;line-height:18px;color:#222;transform:translateX(-100%) scaleX(0.9703);transform-origin:100% 50%;">0.00</span>
<span class="t" style="left:556px;top:2.5px;font-size:13px;line-height:17px;color:#000;font-weight:700;transform:translateX(-50%) scaleX(0.8828);transform-origin:50% 50%;">Adjust Deduction</span>
<span class="t" style="left:487.5px;top:31.5px;font-size:13px;line-height:17px;color:#111;transform:scaleX(0.9331);transform-origin:0 50%;">Code</span>
<span class="t" style="left:625px;top:31.5px;font-size:13px;line-height:17px;color:#111;transform:translateX(-100%) scaleX(0.9372);transform-origin:100% 50%;">Amount</span>
<span class="t" style="left:488px;top:58.0px;font-size:13.5px;line-height:18px;color:#3c5bc0;transform:scaleX(0.8850);transform-origin:0 50%;">LTD - LT...</span>
<span class="t" style="left:625px;top:58.0px;font-size:13.5px;line-height:18px;color:#3c5bc0;transform:translateX(-100%) scaleX(0.8098);transform-origin:100% 50%;">-67.14</span>
<span class="t" style="left:625px;top:98.0px;font-size:13.5px;line-height:18px;color:#000;transform:translateX(-100%) scaleX(0.8098);transform-origin:100% 50%;">-67.14</span>
<span class="t" style="left:625px;top:143.0px;font-size:13.5px;line-height:18px;color:#ff0000;transform:translateX(-100%) scaleX(0.8098);transform-origin:100% 50%;">-67.14</span>
<span class="t" style="left:488.5px;top:103.0px;font-size:9.5px;line-height:12px;color:#3c5bc0;transform:scaleX(0.9555);transform-origin:0 50%;">Show by oo...</span>
<span class="t" style="left:488.5px;top:125.0px;font-size:9.5px;line-height:12px;color:#3c5bc0;transform:scaleX(0.9555);transform-origin:0 50%;">Enter by oo...</span>
<span class="t" style="left:623.5px;top:120.0px;font-size:13.5px;line-height:18px;color:#222;transform:translateX(-100%) scaleX(0.9703);transform-origin:100% 50%;">0.00</span>
<span class="t" style="left:700px;top:2.5px;font-size:13px;line-height:17px;color:#000;font-weight:700;transform:translateX(-50%) scaleX(0.8828);transform-origin:50% 50%;">Adjust Deduction</span>
<span class="t" style="left:631.5px;top:31.5px;font-size:13px;line-height:17px;color:#111;transform:scaleX(0.9331);transform-origin:0 50%;">Code</span>
<span class="t" style="left:769px;top:31.5px;font-size:13px;line-height:17px;color:#111;transform:translateX(-100%) scaleX(0.9372);transform-origin:100% 50%;">Amount</span>
<span class="t" style="left:632px;top:58.0px;font-size:13.5px;line-height:18px;color:#3c5bc0;transform:scaleX(0.8889);transform-origin:0 50%;">MED - H...</span>
<span class="t" style="left:738.5px;top:58.0px;font-size:13.5px;line-height:18px;color:#3c5bc0;transform:scaleX(0.8298);transform-origin:0 50%;">-395.01</span>
<span class="t" style="left:738.5px;top:98.0px;font-size:13.5px;line-height:18px;color:#000;transform:scaleX(0.8298);transform-origin:0 50%;">-395.01</span>
<span class="t" style="left:738.5px;top:143.0px;font-size:13.5px;line-height:18px;color:#ff0000;transform:scaleX(0.8298);transform-origin:0 50%;">-395.01</span>
<span class="t" style="left:632.5px;top:103.0px;font-size:9.5px;line-height:12px;color:#3c5bc0;transform:scaleX(0.9555);transform-origin:0 50%;">Show by oo...</span>
<span class="t" style="left:632.5px;top:125.0px;font-size:9.5px;line-height:12px;color:#3c5bc0;transform:scaleX(0.9555);transform-origin:0 50%;">Enter by oo...</span>
<span class="t" style="left:767.5px;top:120.0px;font-size:13.5px;line-height:18px;color:#222;transform:translateX(-100%) scaleX(0.9703);transform-origin:100% 50%;">0.00</span>
</div>
<span class="t" style="left:1px;top:755.0px;font-size:11px;line-height:14px;color:#111;font-style:italic;transform:scaleX(0.9945);transform-origin:0 50%;">this batch: 1</span>
<span class="t" style="left:0px;top:793.5px;font-size:14px;line-height:18px;color:#3b4fb0;transform:scaleX(0.8110);transform-origin:0 50%;">ns</span>
<div class="a" style="left:356px;top:785.5px;width:88px;height:36px;background:#fff;border:1px solid #3c56b0;border-radius:6px;"></div>
<span class="t" style="left:402.0px;top:795.0px;font-size:13px;line-height:17px;color:#2f48a8;font-weight:700;transform:translateX(-50%) scaleX(0.9599);transform-origin:50% 50%;">CANCEL</span>
<div class="a" style="left:453px;top:785.5px;width:66.5px;height:36px;background:#fff;border:1px solid #3c56b0;border-radius:6px;"></div>
<span class="t" style="left:488.25px;top:795.0px;font-size:13px;line-height:17px;color:#2f48a8;font-weight:700;transform:translateX(-50%) scaleX(0.9292);transform-origin:50% 50%;">SAVE</span>
<div class="a" style="left:529px;top:785.5px;width:133px;height:36px;background:#fff;border:1px solid #3c56b0;border-radius:6px;"></div>
<span class="t" style="left:597.5px;top:795.0px;font-size:13px;line-height:17px;color:#2f48a8;font-weight:700;transform:translateX(-50%) scaleX(0.9444);transform-origin:50% 50%;">AUTO BALANCE</span>
<div class="a" style="left:671px;top:785.5px;width:71.5px;height:36px;background:#334ea6;border-radius:6px;"></div>
<span class="t" style="left:708.75px;top:795.0px;font-size:13px;line-height:17px;color:#fff;font-weight:700;transform:translateX(-50%) scaleX(0.9850);transform-origin:50% 50%;">DONE</span>
<div class="a" style="left:908px;top:798px;width:36px;height:128px;background:#4766c4;border-radius:6px 0 0 6px;"></div>
<svg class="a" style="left:917px;top:807px;" width="18" height="18" viewBox="0 0 18 18"><circle cx="9" cy="9" r="8.5" fill="#fff"/><text x="9" y="13.6" font-size="14" font-weight="700" fill="#4766c4" text-anchor="middle" font-family="Liberation Sans,sans-serif">?</text></svg>
<span class="t" style="left:926px;top:873px;font-size:14px;line-height:18px;font-weight:700;color:#fff;transform:translate(-50%,-50%) rotate(90deg) scaleX(1.02);">Need Help?</span>
<div class="a" style="left:1px;top:1016px;width:944px;height:15px;background:#fcfcfc;"></div>
<svg class="a" style="left:6px;top:1019px;" width="7" height="9" viewBox="0 0 7 9"><path d="M6.5 0.5 L0.5 4.5 L6.5 8.5Z" fill="#8b8b8b"/></svg>
<div class="a" style="left:155px;top:1018.5px;width:756px;height:9px;background:#606060;border-radius:4.5px;"></div>
<svg class="a" style="left:932px;top:1019px;" width="7" height="9" viewBox="0 0 7 9"><path d="M0.5 0.5 L6.5 4.5 L0.5 8.5Z" fill="#8b8b8b"/></svg>
<div class="a" style="left:0px;top:0px;width:960px;height:1px;background:#8a8a8a;"></div>
<div class="a" style="left:0px;top:0px;width:1px;height:1032px;background:#555;"></div>
<div class="a" style="left:0px;top:1031px;width:960px;height:1px;background:#555;"></div>
<div class="a" style="left:960px;top:0px;width:960px;height:1032px;background:#f0f0f0;"></div>
<div class="a" style="left:961px;top:0px;width:8px;height:250px;background:linear-gradient(90deg,#d4d4d4,#e6e6e6 35%,#f0f0f0);"></div>
<svg class="a" style="left:976px;top:16px;" width="17" height="17" viewBox="0 0 17 17"><rect x="4" y="0.5" width="12.5" height="16" rx="1.5" fill="#1f6e3c"/><rect x="4" y="0.5" width="6.3" height="5" fill="#5cbf63"/><rect x="10.3" y="0.5" width="6.2" height="5" rx="1" fill="#b0e06a"/><rect x="10.3" y="5.5" width="6.2" height="6" fill="#27904c"/><rect x="0.5" y="4" width="9" height="9.5" rx="1" fill="#165c33"/><path d="M3 6.3 L7 11.3 M7 6.3 L3 11.3" stroke="#fff" stroke-width="1.4"/></svg>
<span class="t" style="left:1009px;top:17.0px;font-size:12px;line-height:16px;color:#b5b5b5;transform:scaleX(0.9030);transform-origin:0 50%;">AutoSave</span>
<div class="a" style="left:1064.5px;top:14.5px;width:44.5px;height:20px;background:#f0f0f0;border:1px solid #b0b0b0;border-radius:10px;"></div>
<span class="t" style="left:1070.5px;top:17.0px;font-size:12px;line-height:16px;color:#b5b5b5;transform:scaleX(0.9366);transform-origin:0 50%;">On</span>
<div class="a" style="left:1092px;top:18px;width:13px;height:13px;background:#b0b0b0;border-radius:7px;"></div>
<svg class="a" style="left:1122px;top:17px;" width="16" height="16" viewBox="0 0 16 16"><path d="M1 1 H12.5 L15 3.5 V8 M7 15 H1 V1" fill="none" stroke="#b5b5b5" stroke-width="1.1"/><rect x="4" y="1" width="7" height="4.5" fill="none" stroke="#b5b5b5" stroke-width="1.1"/><path d="M8 12 a3.5 3.5 0 0 1 6.5 -1.5 M15 8.5 V10.8 H12.7 M15 13 a3.5 3.5 0 0 1 -6.5 1.2 M8 16.3 V14 H10.3" fill="none" stroke="#b5b5b5" stroke-width="1.1"/></svg>
<svg class="a" style="left:1151px;top:17px;" width="16" height="16" viewBox="0 0 16 16"><path d="M2 2 V7.5 H7.5" fill="none" stroke="#b5b5b5" stroke-width="1.2"/><path d="M2.3 7.2 C5 2.5 12 2.5 13.3 7.5 C14 11 11 13 7.5 15.5" fill="none" stroke="#b5b5b5" stroke-width="1.2"/></svg>
<svg class="a" style="left:1172.0px;top:23.5px;" width="6" height="4.0" viewBox="0 0 6 4.0"><path d="M0.5 0.5 L3.0 3.0 L5.5 0.5" stroke="#b5b5b5" stroke-width="1.1" fill="none"/></svg>
<svg class="a" style="left:1190px;top:17px;" width="16" height="16" viewBox="0 0 16 16"><path d="M14 2 V7.5 H8.5" fill="none" stroke="#b5b5b5" stroke-width="1.2"/><path d="M13.7 7.2 C11 2.5 4 2.5 2.7 7.5 C2 11 5 13 8.5 15.5" fill="none" stroke="#b5b5b5" stroke-width="1.2"/></svg>
<svg class="a" style="left:1211.0px;top:23.5px;" width="6" height="4.0" viewBox="0 0 6 4.0"><path d="M0.5 0.5 L3.0 3.0 L5.5 0.5" stroke="#b5b5b5" stroke-width="1.1" fill="none"/></svg>
<svg class="a" style="left:1232px;top:21px;" width="9" height="8" viewBox="0 0 9 8"><path d="M0.5 0.6 H8.5" stroke="#b5b5b5" stroke-width="1.1"/><path d="M1.5 3.5 L4.5 6.5 L7.5 3.5" fill="none" stroke="#b5b5b5" stroke-width="1.1"/></svg>
<span class="t" style="left:1266px;top:17.5px;font-size:12px;line-height:16px;color:#b5b5b5;transform:scaleX(0.9847);transform-origin:0 50%;">Master - Company Payroll Reminders</span>
<svg class="a" style="left:1470px;top:19px;" width="14" height="12" viewBox="0 0 14 12"><circle cx="4.5" cy="5" r="2" fill="none" stroke="#b5b5b5" stroke-width="1"/><path d="M1 11.5 C1 7.5 8 7.5 8 11.5" fill="none" stroke="#b5b5b5" stroke-width="1"/><circle cx="10" cy="2.8" r="1.8" fill="none" stroke="#b5b5b5" stroke-width="1"/><path d="M8.5 6.3 C11 5.3 13.5 6.5 13.5 9" fill="none" stroke="#b5b5b5" stroke-width="1"/></svg>
<span class="t" style="left:1492.5px;top:17.5px;font-size:12px;line-height:16px;color:#b5b5b5;transform:scaleX(0.9624);transform-origin:0 50%;">&#8226; Saved</span>
<svg class="a" style="left:1537.5px;top:22.75px;" width="9" height="5.5" viewBox="0 0 9 5.5"><path d="M0.5 0.5 L4.5 4.5 L8.5 0.5" stroke="#b5b5b5" stroke-width="1.1" fill="none"/></svg>
<svg class="a" style="left:1686px;top:17px;" width="16" height="16" viewBox="0 0 16 16"><circle cx="10" cy="6" r="4.7" fill="none" stroke="#b5b5b5" stroke-width="1.1"/><path d="M6.5 9.5 L1 15" stroke="#b5b5b5" stroke-width="1.1"/></svg>
<svg class="a" style="left:1739px;top:13.4px;" width="24" height="24" viewBox="0 0 24 24"><defs><clipPath id="av"><circle cx="12" cy="12" r="12"/></clipPath><linearGradient id="hr" x1="0" y1="0" x2="1" y2="1"><stop offset="0" stop-color="#8a6d47"/><stop offset="0.5" stop-color="#cdb68e"/><stop offset="1" stop-color="#9a7d55"/></linearGradient></defs><g clip-path="url(#av)"><rect width="24" height="24" fill="#eceef6"/><path d="M6.5 19 C4.5 14 6 5 9.5 2.5 C13 0.5 17.5 3 18.5 8 C19.5 12 21 15 20 20 L16 22 L8 21Z" fill="url(#hr)"/><ellipse cx="12.3" cy="10.3" rx="3.3" ry="4.4" fill="#e3bfa5"/><path d="M9 8.5 C10 6 14.5 5.5 15.6 9 C15 7.5 13 7 12 7.6 C11 7 9.6 7.4 9 8.5Z" fill="#b3966c"/><path d="M11 14.5 L13.5 14.5 L15 22 L11.5 22Z" fill="#e6c6b0"/><path d="M2.5 20 C4 17.5 8 16.5 10.5 17.5 L13.5 24 H3Z" fill="#15171f"/><path d="M15 18.5 C17 17.5 19.5 18 20.5 19.5 L19 24 H14.5Z" fill="#15171f"/></g></svg>
<svg class="a" style="left:1794px;top:24px;" width="11" height="1" viewBox="0 0 11 1"><rect width="11" height="1" fill="#b5b5b5"/></svg>
<svg class="a" style="left:1842px;top:20px;" width="10" height="10" viewBox="0 0 10 10"><rect x="0.5" y="0.5" width="9" height="9" rx="0.8" fill="none" stroke="#b5b5b5" stroke-width="1"/></svg>
<svg class="a" style="left:1890px;top:20px;" width="11" height="11" viewBox="0 0 11 11"><path d="M0.5 0.5 L10.5 10.5 M10.5 0.5 L0.5 10.5" stroke="#b5b5b5" stroke-width="1" fill="none"/></svg>
<span class="t" style="left:983px;top:55.5px;font-size:13.5px;line-height:18px;color:#242424;transform:scaleX(0.8270);transform-origin:0 50%;">File</span>
<span class="t" style="left:1028px;top:55.5px;font-size:13.5px;line-height:18px;color:#242424;font-weight:700;transform:scaleX(0.9863);transform-origin:0 50%;">Home</span>
<span class="t" style="left:1085px;top:55.5px;font-size:13.5px;line-height:18px;color:#242424;transform:scaleX(0.9477);transform-origin:0 50%;">Insert</span>
<span class="t" style="left:1138px;top:55.5px;font-size:13.5px;line-height:18px;color:#242424;transform:scaleX(0.9519);transform-origin:0 50%;">Draw</span>
<span class="t" style="left:1190px;top:55.5px;font-size:13.5px;line-height:18px;color:#242424;transform:scaleX(0.9365);transform-origin:0 50%;">Page Layout</span>
<span class="t" style="left:1283px;top:55.5px;font-size:13.5px;line-height:18px;color:#242424;transform:scaleX(0.9420);transform-origin:0 50%;">Formulas</span>
<span class="t" style="left:1357px;top:55.5px;font-size:13.5px;line-height:18px;color:#242424;transform:scaleX(0.9463);transform-origin:0 50%;">Data</span>
<span class="t" style="left:1405px;top:55.5px;font-size:13.5px;line-height:18px;color:#242424;transform:scaleX(0.9036);transform-origin:0 50%;">Review</span>
<span class="t" style="left:1465px;top:55.5px;font-size:13.5px;line-height:18px;color:#242424;transform:scaleX(0.9300);transform-origin:0 50%;">View</span>
<span class="t" style="left:1514px;top:55.5px;font-size:13.5px;line-height:18px;color:#242424;transform:scaleX(0.9603);transform-origin:0 50%;">Automate</span>
<span class="t" style="left:1591px;top:55.5px;font-size:13.5px;line-height:18px;color:#242424;transform:scaleX(0.9749);transform-origin:0 50%;">Developer</span>
<span class="t" style="left:1670px;top:55.5px;font-size:13.5px;line-height:18px;color:#242424;transform:scaleX(0.9055);transform-origin:0 50%;">MACRO</span>
<span class="t" style="left:1735px;top:55.5px;font-size:13.5px;line-height:18px;color:#242424;transform:scaleX(0.9724);transform-origin:0 50%;">Help</span>
<span class="t" style="left:1782px;top:55.5px;font-size:13.5px;line-height:18px;color:#242424;transform:scaleX(0.9886);transform-origin:0 50%;">Acrobat</span>
<div class="a" style="left:1028px;top:73.5px;width:37px;height:2.5px;background:#107c41;border-radius:1.5px;"></div>
<div class="a" style="left:1843px;top:52px;width:24px;height:24px;background:#fff;border:1px solid #6e6e6e;border-radius:4px;"></div>
<svg class="a" style="left:1849px;top:58px;" width="12" height="12" viewBox="0 0 12 12"><path d="M1 1 H11 V8 H5 L2.5 10.5 V8 H1Z" fill="none" stroke="#242424" stroke-width="1"/></svg>
<div class="a" style="left:1875px;top:52px;width:32px;height:24px;background:#107c41;border-radius:4px;"></div>
<svg class="a" style="left:1880px;top:57px;" width="13" height="13" viewBox="0 0 13 13"><path d="M5 2.5 H1.5 V12 H11 V9" fill="none" stroke="#fff" stroke-width="1.1"/><path d="M4.5 9 C5 5.5 7 4.5 9.5 4.5 V2 L12.8 5.3 L9.5 8.6 V6.3 C7.5 6.3 5.8 6.8 4.5 9Z" fill="none" stroke="#fff" stroke-width="1"/></svg>
<svg class="a" style="left:1896.5px;top:62.5px;" width="6" height="4.0" viewBox="0 0 6 4.0"><path d="M0.5 0.5 L3.0 3.0 L5.5 0.5" stroke="#fff" stroke-width="1.3" fill="none"/></svg>
<div class="a" style="left:969.5px;top:79.5px;width:941.5px;height:99px;background:#fff;border-radius:8px 8px 0 0;"></div>
<div class="a" style="left:1042.0px;top:84px;width:1px;height:88.5px;background:#dcdcdc;"></div>
<div class="a" style="left:1097.0px;top:84px;width:1px;height:88.5px;background:#dcdcdc;"></div>
<div class="a" style="left:1170.5px;top:84px;width:1px;height:88.5px;background:#dcdcdc;"></div>
<div class="a" style="left:1232.5px;top:84px;width:1px;height:88.5px;background:#dcdcdc;"></div>
<div class="a" style="left:1417.0px;top:84px;width:1px;height:88.5px;background:#dcdcdc;"></div>
<div class="a" style="left:1472.0px;top:84px;width:1px;height:88.5px;background:#dcdcdc;"></div>
<div class="a" style="left:1527.0px;top:84px;width:1px;height:88.5px;background:#dcdcdc;"></div>
<div class="a" style="left:1600.5px;top:84px;width:1px;height:88.5px;background:#dcdcdc;"></div>
<div class="a" style="left:1663.5px;top:84px;width:1px;height:88.5px;background:#dcdcdc;"></div>
<div class="a" style="left:1752.0px;top:84px;width:1px;height:88.5px;background:#dcdcdc;"></div>
<div class="a" style="left:1822.5px;top:84px;width:1px;height:88.5px;background:#dcdcdc;"></div>
<svg class="a" style="left:995px;top:85px;" width="28" height="31" viewBox="0 0 28 31"><rect x="1.5" y="5.5" width="20" height="23" fill="#fdf3e4" stroke="#e8922c" stroke-width="1.3"/><path d="M5.5 8 V3.8 H8.7 a2.6 2.6 0 0 1 5 0 H17 V8Z" fill="#fff" stroke="#8a8a8a" stroke-width="1"/><rect x="14.5" y="13.5" width="13" height="17" fill="#fff" stroke="#444" stroke-width="1.2"/></svg>
<span class="t" style="left:1007px;top:118.0px;font-size:13px;line-height:17px;color:#242424;transform:translateX(-50%) scaleX(0.9253);transform-origin:50% 50%;">Clipboard</span>
<svg class="a" style="left:1003.5px;top:141.0px;" width="6" height="4.0" viewBox="0 0 6 4.0"><path d="M0.5 0.5 L3.0 3.0 L5.5 0.5" stroke="#333" stroke-width="1.2" fill="none"/></svg>
<svg class="a" style="left:1054px;top:87px;" width="32" height="30" viewBox="0 0 32 30"><path d="M8.5 20 L16 1.5 L23.5 20 M11 14 H21" fill="none" stroke="#333" stroke-width="1.3"/><rect x="0" y="21" width="32" height="8" fill="#222"/></svg>
<span class="t" style="left:1070px;top:118.0px;font-size:13px;line-height:17px;color:#242424;transform:translateX(-50%) scaleX(0.9225);transform-origin:50% 50%;">Font</span>
<svg class="a" style="left:1066.5px;top:141.0px;" width="6" height="4.0" viewBox="0 0 6 4.0"><path d="M0.5 0.5 L3.0 3.0 L5.5 0.5" stroke="#333" stroke-width="1.2" fill="none"/></svg>
<svg class="a" style="left:1120px;top:88px;" width="28" height="22" viewBox="0 0 28 22"><path d="M0 1 H28 M4.2 6.1 H23.8 M0 11.2 H28 M4.2 16.3 H23.8 M0 21.4 H28" stroke="#333" stroke-width="1"/></svg>
<span class="t" style="left:1134px;top:118.0px;font-size:13px;line-height:17px;color:#242424;transform:translateX(-50%) scaleX(0.9600);transform-origin:50% 50%;">Alignment</span>
<svg class="a" style="left:1130.5px;top:141.0px;" width="6" height="4.0" viewBox="0 0 6 4.0"><path d="M0.5 0.5 L3.0 3.0 L5.5 0.5" stroke="#333" stroke-width="1.2" fill="none"/></svg>
<span class="t" style="left:1202px;top:80.0px;font-size:36px;line-height:42px;color:#333;transform:translateX(-50%) scaleX(0.8746);transform-origin:50% 50%;-webkit-text-stroke:1px #fff;">%</span>
<span class="t" style="left:1202px;top:118.0px;font-size:13px;line-height:17px;color:#242424;transform:translateX(-50%) scaleX(0.9514);transform-origin:50% 50%;">Number</span>
<svg class="a" style="left:1198.5px;top:141.0px;" width="6" height="4.0" viewBox="0 0 6 4.0"><path d="M0.5 0.5 L3.0 3.0 L5.5 0.5" stroke="#333" stroke-width="1.2" fill="none"/></svg>
<svg class="a" style="left:1246px;top:88px;" width="16" height="15" viewBox="0 0 16 15"><rect x="0.5" y="0.5" width="15" height="14" fill="#fff" stroke="#444" stroke-width="1"/><path d="M0.5 5 H15.5 M0.5 10 H15.5 M5.5 0.5 V14.5 M10.5 0.5 V14.5" stroke="#444" stroke-width="1"/><rect x="1" y="1" width="4.5" height="4" fill="#e8454a"/><rect x="5.5" y="5" width="5" height="5" fill="#4a90e2"/><rect x="10.5" y="1" width="4.5" height="4" fill="#f2a2a5"/><rect x="1" y="10" width="4.5" height="4" fill="#f2a2a5"/><rect x="10.5" y="10" width="4.5" height="4" fill="#e8454a"/></svg>
<svg class="a" style="left:1246px;top:114px;" width="16" height="15" viewBox="0 0 16 15"><rect x="0.5" y="0.5" width="15" height="12" fill="#fff" stroke="#444" stroke-width="1"/><path d="M0.5 4 H15.5 M0.5 8 H15.5 M5.5 0.5 V12.5 M10.5 0.5 V12.5" stroke="#444" stroke-width="1"/><rect x="5.5" y="4" width="10" height="8.5" fill="#bfd7f5"/><path d="M13.5 3 L7 11.5 L4.5 14.5 L3.5 12 Z" fill="#3a78c9"/><path d="M14.5 2 L8 10" stroke="#444" stroke-width="1.6"/></svg>
<svg class="a" style="left:1246px;top:140px;" width="16" height="15" viewBox="0 0 16 15"><rect x="0.5" y="0.5" width="15" height="12" fill="#fff" stroke="#444" stroke-width="1"/><path d="M0.5 4 H15.5 M0.5 8 H15.5 M5.5 0.5 V12.5 M10.5 0.5 V12.5" stroke="#444" stroke-width="1"/><rect x="5.5" y="4" width="10" height="8.5" fill="#bfd7f5"/><path d="M13.5 3 L7 11.5 L4.5 14.5 L3.5 12 Z" fill="#3a78c9"/><path d="M14.5 2 L8 10" stroke="#444" stroke-width="1.6"/></svg>
<span class="t" style="left:1266px;top:87.0px;font-size:13px;line-height:17px;color:#242424;transform:scaleX(0.9442);transform-origin:0 50%;">Conditional Formatting</span>
<svg class="a" style="left:1393.0px;top:94.5px;" width="6" height="4.0" viewBox="0 0 6 4.0"><path d="M0.5 0.5 L3.0 3.0 L5.5 0.5" stroke="#333" stroke-width="1.2" fill="none"/></svg>
<span class="t" style="left:1266px;top:113.0px;font-size:13px;line-height:17px;color:#242424;transform:scaleX(0.8928);transform-origin:0 50%;">Format as Table</span>
<svg class="a" style="left:1352.5px;top:120.5px;" width="6" height="4.0" viewBox="0 0 6 4.0"><path d="M0.5 0.5 L3.0 3.0 L5.5 0.5" stroke="#333" stroke-width="1.2" fill="none"/></svg>
<span class="t" style="left:1266px;top:139.0px;font-size:13px;line-height:17px;color:#242424;transform:scaleX(0.8629);transform-origin:0 50%;">Cell Styles</span>
<svg class="a" style="left:1322.5px;top:146.0px;" width="6" height="4.0" viewBox="0 0 6 4.0"><path d="M0.5 0.5 L3.0 3.0 L5.5 0.5" stroke="#333" stroke-width="1.2" fill="none"/></svg>
<span class="t" style="left:1325px;top:161.0px;font-size:12px;line-height:16px;color:#242424;transform:translateX(-50%) scaleX(0.8872);transform-origin:50% 50%;">Styles</span>
<svg class="a" style="left:1431px;top:84px;" width="29" height="28" viewBox="0 0 29 28"><path d="M7 1.8 H20.5 M7 0.3 V3.3 M20.5 0.3 V3.3" stroke="#2b7cd3" stroke-width="0.9" fill="none"/><rect x="0.5" y="5.8" width="27.2" height="21" fill="#fafafa" stroke="#444" stroke-width="1"/><path d="M0.5 12.8 H27.7 M0.5 19.8 H27.7 M7 5.8 V26.8 M20.5 5.8 V26.8" stroke="#444" stroke-width="1"/><rect x="7" y="12.8" width="13.5" height="7" fill="#7ab5ee" stroke="#2b7cd3" stroke-width="1"/></svg>
<span class="t" style="left:1445px;top:118.0px;font-size:13px;line-height:17px;color:#242424;transform:translateX(-50%) scaleX(0.8649);transform-origin:50% 50%;">Cells</span>
<svg class="a" style="left:1441.5px;top:141.0px;" width="6" height="4.0" viewBox="0 0 6 4.0"><path d="M0.5 0.5 L3.0 3.0 L5.5 0.5" stroke="#333" stroke-width="1.2" fill="none"/></svg>
<svg class="a" style="left:1484px;top:85px;" width="32" height="32" viewBox="0 0 32 32"><circle cx="20" cy="12" r="10.5" fill="none" stroke="#444" stroke-width="1.2"/><path d="M12.5 19.5 L1 30" stroke="#444" stroke-width="1.3"/></svg>
<span class="t" style="left:1499px;top:118.0px;font-size:13px;line-height:17px;color:#242424;transform:translateX(-50%) scaleX(0.9308);transform-origin:50% 50%;">Editing</span>
<svg class="a" style="left:1496.0px;top:141.0px;" width="6" height="4.0" viewBox="0 0 6 4.0"><path d="M0.5 0.5 L3.0 3.0 L5.5 0.5" stroke="#333" stroke-width="1.2" fill="none"/></svg>
<svg class="a" style="left:1553px;top:84px;" width="32" height="32" viewBox="0 0 32 32"><rect x="1.5" y="4.5" width="20" height="27" fill="#f0f0f0" stroke="#d2d2d2" stroke-width="1"/><g transform="rotate(-42 17 12)"><rect x="6" y="8" width="17" height="8.5" fill="#f6f6f6" stroke="#c4c4c4" stroke-width="1"/><path d="M8.5 10.2 H18 M8.5 12.2 H18 M8.5 14.2 H18" stroke="#c4c4c4" stroke-width="0.9"/><rect x="23" y="5.5" width="6.5" height="13.5" fill="#e2e2e2" stroke="#c4c4c4" stroke-width="1"/></g></svg>
<span class="t" style="left:1564px;top:120.5px;font-size:13px;line-height:17px;color:#b5b5b5;transform:translateX(-50%) scaleX(0.9055);transform-origin:50% 50%;">Sensitivity</span>
<svg class="a" style="left:1561.0px;top:143.0px;" width="6" height="4.0" viewBox="0 0 6 4.0"><path d="M0.5 0.5 L3.0 3.0 L5.5 0.5" stroke="#b5b5b5" stroke-width="1.2" fill="none"/></svg>
<span class="t" style="left:1564.5px;top:161.0px;font-size:12px;line-height:16px;color:#242424;transform:translateX(-50%) scaleX(0.9439);transform-origin:50% 50%;">Sensitivity</span>
<svg class="a" style="left:1618.5px;top:87.5px;" width="28" height="28" viewBox="0 0 28 28"><rect x="0.75" y="0.75" width="26.5" height="26.5" fill="#fff" stroke="#d83b01" stroke-width="1.5"/><rect x="4" y="4" width="8.5" height="8.5" fill="none" stroke="#d83b01" stroke-width="1.2"/><rect x="15.5" y="4" width="8.5" height="8.5" fill="none" stroke="#d83b01" stroke-width="1.2"/><rect x="4" y="15.5" width="8.5" height="8.5" fill="none" stroke="#d83b01" stroke-width="1.2"/><rect x="15.5" y="15.5" width="8.5" height="8.5" fill="none" stroke="#d83b01" stroke-width="1.2"/></svg>
<span class="t" style="left:1633px;top:120.5px;font-size:13px;line-height:17px;color:#242424;transform:translateX(-50%) scaleX(0.9529);transform-origin:50% 50%;">Add-ins</span>
<span class="t" style="left:1633px;top:161.0px;font-size:12px;line-height:16px;color:#242424;transform:translateX(-50%) scaleX(0.9708);transform-origin:50% 50%;">Add-ins</span>
<svg class="a" style="left:1677px;top:87px;" width="16" height="16" viewBox="0 0 16 16"><defs><linearGradient id="cp1" x1="0" y1="0" x2="1" y2="1"><stop offset="0" stop-color="#2a7de1"/><stop offset="0.35" stop-color="#36c5a8"/><stop offset="0.65" stop-color="#f7b731"/><stop offset="1" stop-color="#e0409a"/></linearGradient></defs><path d="M5.5 1 H10 Q12 1 12.5 3 L13.5 6.5 Q15.5 6.5 15.5 9 Q15.5 12 13 14 Q12 15 10.5 15 H6 Q4 15 3.5 13 L2.5 9.5 Q0.5 9.5 0.5 7 Q0.5 4 3 2 Q4 1 5.5 1Z" fill="url(#cp1)"/><path d="M6.5 5 H9.8 L11 11 H7.7Z" fill="#fff" opacity="0.9"/></svg>
<span class="t" style="left:1697.5px;top:87.0px;font-size:13px;line-height:17px;color:#242424;transform:scaleX(0.9514);transform-origin:0 50%;">Copilot</span>
<svg class="a" style="left:1778px;top:87px;" width="28" height="29" viewBox="0 0 28 29"><path d="M7 22.5 H3 Q1 22.5 1 20.5 V3 Q1 1 3 1 H13 L19 7 V12" fill="none" stroke="#2f6fd6" stroke-width="1.2"/><path d="M13 1 V7 H19" fill="none" stroke="#2f6fd6" stroke-width="1.2"/><path d="M6 15 C9 13 11 8 10 7 C9 6.5 9 10 11.5 12.5 C13 14 15 13.5 14 13 C12.5 12.5 8 13.5 6 15Z" fill="none" stroke="#2f6fd6" stroke-width="0.9"/><g transform="rotate(-40 19 21)" fill="none" stroke="#2f6fd6" stroke-width="1.5"><rect x="11" y="18" width="9" height="6" rx="3"/><rect x="18" y="18" width="9" height="6" rx="3"/></g></svg>
<span class="t" style="left:1787.5px;top:118.0px;font-size:13px;line-height:17px;color:#242424;transform:translateX(-50%) scaleX(0.9443);transform-origin:50% 50%;">Adobe</span>
<span class="t" style="left:1782px;top:134.0px;font-size:13px;line-height:17px;color:#242424;transform:translateX(-50%) scaleX(0.9372);transform-origin:50% 50%;">Acrobat</span>
<svg class="a" style="left:1806.5px;top:141.5px;" width="6" height="4.0" viewBox="0 0 6 4.0"><path d="M0.5 0.5 L3.0 3.0 L5.5 0.5" stroke="#333" stroke-width="1.2" fill="none"/></svg>
<svg class="a" style="left:1849px;top:87px;overflow:hidden;" width="16" height="30" viewBox="0 0 16 30"><circle cx="15" cy="14.5" r="14" fill="#1aa33a"/><circle cx="15" cy="14.5" r="5.5" fill="none" stroke="#fff" stroke-width="2.2"/></svg>
<div class="a" style="left:1824px;top:118px;width:36px;height:60px;overflow:hidden;">
<span class="t" style="left:10px;top:2.5px;font-size:13px;line-height:17px;color:#242424;transform:scaleX(0.8680);transform-origin:0 50%;">Spreadsheet</span>
<span class="t" style="left:30px;top:18.5px;font-size:13px;line-height:17px;color:#242424;transform:scaleX(0.9400);transform-origin:0 50%;">Server</span>
<span class="t" style="left:6.5px;top:43.0px;font-size:12px;line-height:16px;color:#242424;transform:scaleX(0.8815);transform-origin:0 50%;">Spreadsheet</span>
</div>
<div class="a" style="left:1859.5px;top:79.5px;width:23.5px;height:99px;background:#fff;border:1px solid #8a8a8a;"></div>
<svg class="a" style="left:1868px;top:124px;" width="5" height="8" viewBox="0 0 5 8"><path d="M1 0.8 L4.2 4 L1 7.2" stroke="#333" stroke-width="1.1" fill="none"/></svg>
<svg class="a" style="left:1891.5px;top:163.25px;" width="9" height="5.5" viewBox="0 0 9 5.5"><path d="M0.5 0.5 L4.5 4.5 L8.5 0.5" stroke="#333" stroke-width="1.2" fill="none"/></svg>
<div class="a" style="left:969.5px;top:178.5px;width:941.5px;height:31px;background:#fdf6d3;border-radius:0 0 8px 8px;box-shadow:0 1px 3px rgba(0,0,0,0.25);"></div>
<svg class="a" style="left:981px;top:186px;" width="16" height="16" viewBox="0 0 16 16"><circle cx="8" cy="8" r="7.3" fill="#fff" stroke="#1a7fd4" stroke-width="1.2"/><circle cx="8" cy="4.8" r="1" fill="#1a7fd4"/><rect x="7.2" y="6.8" width="1.6" height="5.2" fill="#1a7fd4"/></svg>
<span class="t" style="left:1005px;top:186.5px;font-size:12px;line-height:16px;color:#1f1f1f;font-weight:700;transform:scaleX(0.9034);transform-origin:0 50%;">SLOW WORKBOOK?</span>
<span class="t" style="left:1124px;top:186.5px;font-size:12px;line-height:16px;color:#1f1f1f;transform:scaleX(1.0038);transform-origin:0 50%;">97% of your workbook has unused formatting and metadata that can be optimized to improve performance.</span>
<div class="a" style="left:1705.5px;top:182px;width:123.5px;height:24.5px;background:#fff;border:1px solid #8a8a8a;border-radius:3px;"></div>
<span class="t" style="left:1767px;top:186.5px;font-size:12px;line-height:16px;color:#1f1f1f;transform:translateX(-50%) scaleX(0.9807);transform-origin:50% 50%;">Check Performance</span>
<svg class="a" style="left:1890px;top:189px;" width="10" height="10" viewBox="0 0 10 10"><path d="M0.7 0.7 L9.3 9.3 M9.3 0.7 L0.7 9.3" stroke="#333" stroke-width="1.2"/></svg>
<div class="a" style="left:969px;top:217px;width:101.5px;height:25.5px;background:#fff;border:1px solid #d4d4d4;border-radius:5px;"></div>
<span class="t" style="left:976px;top:221.5px;font-size:13px;line-height:17px;color:#242424;transform:scaleX(0.9883);transform-origin:0 50%;">M47</span>
<svg class="a" style="left:1054.0px;top:228.0px;" width="10" height="6.0" viewBox="0 0 10 6.0"><path d="M0.5 0.5 L5.0 5.0 L9.5 0.5" stroke="#333" stroke-width="1.3" fill="none"/></svg>
<svg class="a" style="left:1080px;top:225px;" width="3" height="11" viewBox="0 0 3 11"><circle cx="1.5" cy="1.5" r="1" fill="#444"/><circle cx="1.5" cy="5.5" r="1" fill="#444"/><circle cx="1.5" cy="9.5" r="1" fill="#444"/></svg>
<div class="a" style="left:1091px;top:217px;width:86px;height:25.5px;background:#fff;border:1px solid #d4d4d4;border-radius:5px;"></div>
<svg class="a" style="left:1098px;top:224px;" width="12" height="12" viewBox="0 0 12 12"><path d="M0.7 0.7 L11.3 11.3 M11.3 0.7 L0.7 11.3" stroke="#b5b5b5" stroke-width="1.1"/></svg>
<svg class="a" style="left:1120px;top:224px;" width="15" height="12" viewBox="0 0 15 12"><path d="M0.7 6.5 L5 11 L14.3 0.7" stroke="#b5b5b5" stroke-width="1.1" fill="none"/></svg>
<span class="t" style="left:1152px;top:218.5px;font-size:17px;line-height:22px;color:#222;font-style:italic;font-family:'Liberation Serif',serif;transform:translateX(-50%) scaleX(1.1399);transform-origin:50% 50%;">fx</span>
<svg class="a" style="left:1165.0px;top:228.5px;" width="8" height="5.0" viewBox="0 0 8 5.0"><path d="M0.5 0.5 L4.0 4.0 L7.5 0.5" stroke="#8a8a8a" stroke-width="1.1" fill="none"/></svg>
<div class="a" style="left:1181px;top:217px;width:730px;height:25.5px;background:#fff;border:1px solid #d4d4d4;border-radius:5px;"></div>
<svg class="a" style="left:1896.0px;top:226.0px;" width="10" height="6.0" viewBox="0 0 10 6.0"><path d="M0.5 0.5 L5.0 5.0 L9.5 0.5" stroke="#333" stroke-width="1.3" fill="none"/></svg>
<div class="a" style="left:961px;top:250px;width:937px;height:727px;background:#fff;"></div>
<div class="a" style="left:961px;top:250px;width:937px;height:20px;background:#f0f0f0;"></div>
<svg class="a" style="left:971px;top:254px;" width="13" height="13" viewBox="0 0 13 13"><path d="M12 1 V12 H1Z" fill="#dcdcdc"/></svg>
<span class="t" style="left:1124.5px;top:251.0px;font-size:13px;line-height:17px;color:#444;transform:translateX(-50%);transform-origin:50% 50%;">E</span>
<div class="a" style="left:1261.5px;top:253px;width:1px;height:17px;background:#dcdcdc;"></div>
<span class="t" style="left:1295.5px;top:251.0px;font-size:13px;line-height:17px;color:#444;transform:translateX(-50%);transform-origin:50% 50%;">F</span>
<div class="a" style="left:1328.5px;top:253px;width:1px;height:17px;background:#dcdcdc;"></div>
<span class="t" style="left:1361.0px;top:251.0px;font-size:13px;line-height:17px;color:#444;transform:translateX(-50%);transform-origin:50% 50%;">G</span>
<div class="a" style="left:1392.5px;top:253px;width:1px;height:17px;background:#dcdcdc;"></div>
<span class="t" style="left:1425.25px;top:251.0px;font-size:13px;line-height:17px;color:#444;transform:translateX(-50%);transform-origin:50% 50%;">H</span>
<div class="a" style="left:1457.0px;top:253px;width:1px;height:17px;background:#dcdcdc;"></div>
<span class="t" style="left:1489.25px;top:251.0px;font-size:13px;line-height:17px;color:#444;transform:translateX(-50%);transform-origin:50% 50%;">I</span>
<div class="a" style="left:1520.5px;top:253px;width:1px;height:17px;background:#dcdcdc;"></div>
<span class="t" style="left:1553.25px;top:251.0px;font-size:13px;line-height:17px;color:#444;transform:translateX(-50%);transform-origin:50% 50%;">J</span>
<div class="a" style="left:1585.0px;top:253px;width:1px;height:17px;background:#dcdcdc;"></div>
<span class="t" style="left:1617.75px;top:251.0px;font-size:13px;line-height:17px;color:#444;transform:translateX(-50%);transform-origin:50% 50%;">K</span>
<div class="a" style="left:1649.5px;top:253px;width:1px;height:17px;background:#dcdcdc;"></div>
<span class="t" style="left:1683.0px;top:251.0px;font-size:13px;line-height:17px;color:#444;transform:translateX(-50%);transform-origin:50% 50%;">L</span>
<div class="a" style="left:1715.5px;top:253px;width:1px;height:17px;background:#dcdcdc;"></div>
<span class="t" style="left:1748.5px;top:251.0px;font-size:13px;line-height:17px;color:#444;transform:translateX(-50%);transform-origin:50% 50%;">M</span>
<div class="a" style="left:1780.5px;top:253px;width:1px;height:17px;background:#dcdcdc;"></div>
<span class="t" style="left:1812.5px;top:251.0px;font-size:13px;line-height:17px;color:#444;transform:translateX(-50%);transform-origin:50% 50%;">N</span>
<div class="a" style="left:1843.5px;top:253px;width:1px;height:17px;background:#dcdcdc;"></div>
<span class="t" style="left:1876.5px;top:251.0px;font-size:13px;line-height:17px;color:#444;transform:translateX(-50%);transform-origin:50% 50%;">O</span>
<div class="a" style="left:986.5px;top:253px;width:1px;height:17px;background:#dcdcdc;"></div>
<div class="a" style="left:961px;top:270px;width:26px;height:707px;background:#f0f0f0;background:linear-gradient(90deg,#8f8f8f 0,#cfcfcf 2px,#ebebeb 4.5px,#f0f0f0 8px);">
</div>
<div class="a" style="left:986px;top:250px;width:1px;height:727px;background:#c6c6c6;"></div>
<div class="a" style="left:987px;top:269px;width:911px;height:1px;background:#c6c6c6;"></div>
<span class="t" style="left:973.5px;top:272.0px;font-size:13px;line-height:17px;color:#444;transform:translateX(-50%) scaleX(1.0367);transform-origin:50% 50%;">1</span>
<div class="a" style="left:961px;top:290.5px;width:26px;height:1px;background:#dcdcdc;"></div>
<span class="t" style="left:973.5px;top:292.5px;font-size:13px;line-height:17px;color:#444;transform:translateX(-50%) scaleX(1.0367);transform-origin:50% 50%;">2</span>
<div class="a" style="left:961px;top:310.5px;width:26px;height:1px;background:#dcdcdc;"></div>
<span class="t" style="left:973.5px;top:313.0px;font-size:13px;line-height:17px;color:#444;transform:translateX(-50%) scaleX(1.0367);transform-origin:50% 50%;">3</span>
<div class="a" style="left:961px;top:331.5px;width:26px;height:1px;background:#dcdcdc;"></div>
<span class="t" style="left:973.5px;top:333.5px;font-size:13px;line-height:17px;color:#444;transform:translateX(-50%) scaleX(1.0367);transform-origin:50% 50%;">4</span>
<div class="a" style="left:961px;top:351.5px;width:26px;height:1px;background:#dcdcdc;"></div>
<span class="t" style="left:973.5px;top:353.5px;font-size:13px;line-height:17px;color:#444;transform:translateX(-50%) scaleX(1.0367);transform-origin:50% 50%;">5</span>
<div class="a" style="left:961px;top:371.5px;width:26px;height:1px;background:#dcdcdc;"></div>
<span class="t" style="left:973.5px;top:375.0px;font-size:13px;line-height:17px;color:#1a1ae6;transform:translateX(-50%) scaleX(1.0022);transform-origin:50% 50%;">44</span>
<div class="a" style="left:961px;top:392.5px;width:26px;height:1px;background:#dcdcdc;"></div>
<span class="t" style="left:973.5px;top:395.0px;font-size:13px;line-height:17px;color:#1a1ae6;transform:translateX(-50%) scaleX(1.0022);transform-origin:50% 50%;">45</span>
<div class="a" style="left:961px;top:412.5px;width:26px;height:1px;background:#dcdcdc;"></div>
<span class="t" style="left:973.5px;top:415.0px;font-size:13px;line-height:17px;color:#1a1ae6;transform:translateX(-50%) scaleX(1.0022);transform-origin:50% 50%;">46</span>
<div class="a" style="left:961px;top:432.5px;width:26px;height:1px;background:#dcdcdc;"></div>
<span class="t" style="left:973.5px;top:455.0px;font-size:13px;line-height:17px;color:#1a1ae6;transform:translateX(-50%) scaleX(1.0022);transform-origin:50% 50%;">47</span>
<div class="a" style="left:961px;top:472.5px;width:26px;height:1px;background:#dcdcdc;"></div>
<span class="t" style="left:973.5px;top:475.0px;font-size:13px;line-height:17px;color:#1a1ae6;transform:translateX(-50%) scaleX(1.0022);transform-origin:50% 50%;">48</span>
<div class="a" style="left:961px;top:492.5px;width:26px;height:1px;background:#dcdcdc;"></div>
<span class="t" style="left:973.5px;top:495.0px;font-size:13px;line-height:17px;color:#444;transform:translateX(-50%) scaleX(1.0022);transform-origin:50% 50%;">49</span>
<div class="a" style="left:961px;top:512.5px;width:26px;height:1px;background:#dcdcdc;"></div>
<span class="t" style="left:973.5px;top:535.0px;font-size:13px;line-height:17px;color:#444;transform:translateX(-50%) scaleX(1.0022);transform-origin:50% 50%;">50</span>
<div class="a" style="left:961px;top:552.5px;width:26px;height:1px;background:#dcdcdc;"></div>
<span class="t" style="left:973.5px;top:575.0px;font-size:13px;line-height:17px;color:#444;transform:translateX(-50%) scaleX(1.0022);transform-origin:50% 50%;">51</span>
<div class="a" style="left:961px;top:592.5px;width:26px;height:1px;background:#dcdcdc;"></div>
<span class="t" style="left:973.5px;top:595.0px;font-size:13px;line-height:17px;color:#444;transform:translateX(-50%) scaleX(1.0022);transform-origin:50% 50%;">52</span>
<div class="a" style="left:961px;top:612.5px;width:26px;height:1px;background:#dcdcdc;"></div>
<span class="t" style="left:973.5px;top:615.0px;font-size:13px;line-height:17px;color:#444;transform:translateX(-50%) scaleX(1.0022);transform-origin:50% 50%;">53</span>
<div class="a" style="left:961px;top:632.5px;width:26px;height:1px;background:#dcdcdc;"></div>
<span class="t" style="left:973.5px;top:635.0px;font-size:13px;line-height:17px;color:#444;transform:translateX(-50%) scaleX(1.0022);transform-origin:50% 50%;">54</span>
<div class="a" style="left:961px;top:652.5px;width:26px;height:1px;background:#dcdcdc;"></div>
<span class="t" style="left:973.5px;top:655.0px;font-size:13px;line-height:17px;color:#444;transform:translateX(-50%) scaleX(1.0022);transform-origin:50% 50%;">55</span>
<div class="a" style="left:961px;top:672.5px;width:26px;height:1px;background:#dcdcdc;"></div>
<span class="t" style="left:973.5px;top:675.0px;font-size:13px;line-height:17px;color:#444;transform:translateX(-50%) scaleX(1.0022);transform-origin:50% 50%;">56</span>
<div class="a" style="left:961px;top:692.5px;width:26px;height:1px;background:#dcdcdc;"></div>
<span class="t" style="left:973.5px;top:695.0px;font-size:13px;line-height:17px;color:#444;transform:translateX(-50%) scaleX(1.0022);transform-origin:50% 50%;">57</span>
<div class="a" style="left:961px;top:712.5px;width:26px;height:1px;background:#dcdcdc;"></div>
<span class="t" style="left:973.5px;top:715.0px;font-size:13px;line-height:17px;color:#444;transform:translateX(-50%) scaleX(1.0022);transform-origin:50% 50%;">58</span>
<div class="a" style="left:961px;top:732.5px;width:26px;height:1px;background:#dcdcdc;"></div>
<span class="t" style="left:973.5px;top:735.0px;font-size:13px;line-height:17px;color:#444;transform:translateX(-50%) scaleX(1.0022);transform-origin:50% 50%;">59</span>
<div class="a" style="left:961px;top:752.5px;width:26px;height:1px;background:#dcdcdc;"></div>
<span class="t" style="left:973.5px;top:755.0px;font-size:13px;line-height:17px;color:#444;transform:translateX(-50%) scaleX(1.0022);transform-origin:50% 50%;">60</span>
<div class="a" style="left:961px;top:772.5px;width:26px;height:1px;background:#dcdcdc;"></div>
<span class="t" style="left:973.5px;top:775.0px;font-size:13px;line-height:17px;color:#444;transform:translateX(-50%) scaleX(1.0022);transform-origin:50% 50%;">61</span>
<div class="a" style="left:961px;top:792.5px;width:26px;height:1px;background:#dcdcdc;"></div>
<span class="t" style="left:973.5px;top:795.0px;font-size:13px;line-height:17px;color:#444;transform:translateX(-50%) scaleX(1.0022);transform-origin:50% 50%;">62</span>
<div class="a" style="left:961px;top:812.5px;width:26px;height:1px;background:#dcdcdc;"></div>
<span class="t" style="left:973.5px;top:815.0px;font-size:13px;line-height:17px;color:#444;transform:translateX(-50%) scaleX(1.0022);transform-origin:50% 50%;">63</span>
<div class="a" style="left:961px;top:832.5px;width:26px;height:1px;background:#dcdcdc;"></div>
<span class="t" style="left:973.5px;top:835.0px;font-size:13px;line-height:17px;color:#444;transform:translateX(-50%) scaleX(1.0022);transform-origin:50% 50%;">64</span>
<div class="a" style="left:961px;top:852.5px;width:26px;height:1px;background:#dcdcdc;"></div>
<span class="t" style="left:973.5px;top:855.0px;font-size:13px;line-height:17px;color:#444;transform:translateX(-50%) scaleX(1.0022);transform-origin:50% 50%;">65</span>
<div class="a" style="left:961px;top:872.5px;width:26px;height:1px;background:#dcdcdc;"></div>
<span class="t" style="left:973.5px;top:875.0px;font-size:13px;line-height:17px;color:#444;transform:translateX(-50%) scaleX(1.0022);transform-origin:50% 50%;">66</span>
<div class="a" style="left:961px;top:892.5px;width:26px;height:1px;background:#dcdcdc;"></div>
<span class="t" style="left:973.5px;top:895.0px;font-size:13px;line-height:17px;color:#444;transform:translateX(-50%) scaleX(1.0022);transform-origin:50% 50%;">67</span>
<div class="a" style="left:961px;top:912.5px;width:26px;height:1px;background:#dcdcdc;"></div>
<span class="t" style="left:973.5px;top:915.0px;font-size:13px;line-height:17px;color:#444;transform:translateX(-50%) scaleX(1.0022);transform-origin:50% 50%;">68</span>
<div class="a" style="left:961px;top:932.5px;width:26px;height:1px;background:#dcdcdc;"></div>
<span class="t" style="left:973.5px;top:935.0px;font-size:13px;line-height:17px;color:#444;transform:translateX(-50%) scaleX(1.0022);transform-origin:50% 50%;">69</span>
<div class="a" style="left:961px;top:952.5px;width:26px;height:1px;background:#dcdcdc;"></div>
<span class="t" style="left:973.5px;top:955.0px;font-size:13px;line-height:17px;color:#444;transform:translateX(-50%) scaleX(1.0022);transform-origin:50% 50%;">70</span>
<div class="a" style="left:961px;top:972.5px;width:26px;height:1px;background:#dcdcdc;"></div>
<div class="a" style="left:987px;top:351px;width:276px;height:21px;background:#000;"></div>
<span class="t" style="left:989px;top:352.5px;font-size:15px;line-height:20px;color:#fff;font-weight:700;transform:scaleX(0.8995);transform-origin:0 50%;">Screenshots</span>
<div class="a" style="left:1245px;top:354px;width:17px;height:17px;background:#fff;border:1px solid #8a8a8a;background:linear-gradient(#fff,#e8e8e8);"></div>
<svg class="a" style="left:1249.5px;top:360.5px;" width="8" height="5" viewBox="0 0 8 5"><path d="M0 0 H8 L4 4.5Z" fill="#555"/></svg>
<div class="a" style="left:961px;top:372px;width:937px;height:1px;background:#7a7a7a;"></div>
<div class="a" style="left:987px;top:373px;width:275px;height:604px;background:#f2f2f2;"></div>
<div class="a" style="left:987px;top:392px;width:275px;height:1.5px;background:#fff;"></div>
<div class="a" style="left:987px;top:412px;width:275px;height:1.5px;background:#fff;"></div>
<div class="a" style="left:987px;top:432px;width:275px;height:1.5px;background:#fff;"></div>
<div class="a" style="left:987px;top:472px;width:275px;height:1.5px;background:#fff;"></div>
<div class="a" style="left:987px;top:492px;width:275px;height:1.5px;background:#fff;"></div>
<div class="a" style="left:987px;top:512px;width:275px;height:1.5px;background:#fff;"></div>
<div class="a" style="left:987px;top:552px;width:275px;height:1.5px;background:#fff;"></div>
<div class="a" style="left:987px;top:592px;width:275px;height:1.5px;background:#fff;"></div>
<div class="a" style="left:987px;top:612px;width:275px;height:1.5px;background:#fff;"></div>
<div class="a" style="left:987px;top:632px;width:275px;height:1.5px;background:#fff;"></div>
<div class="a" style="left:987px;top:652px;width:275px;height:1.5px;background:#fff;"></div>
<div class="a" style="left:987px;top:672px;width:275px;height:1.5px;background:#fff;"></div>
<div class="a" style="left:987px;top:692px;width:275px;height:1.5px;background:#fff;"></div>
<div class="a" style="left:987px;top:712px;width:275px;height:1.5px;background:#fff;"></div>
<div class="a" style="left:987px;top:732px;width:275px;height:1.5px;background:#fff;"></div>
<div class="a" style="left:987px;top:752px;width:275px;height:1.5px;background:#fff;"></div>
<div class="a" style="left:987px;top:772px;width:275px;height:1.5px;background:#fff;"></div>
<div class="a" style="left:987px;top:792px;width:275px;height:1.5px;background:#fff;"></div>
<div class="a" style="left:987px;top:812px;width:275px;height:1.5px;background:#fff;"></div>
<div class="a" style="left:987px;top:832px;width:275px;height:1.5px;background:#fff;"></div>
<div class="a" style="left:987px;top:852px;width:275px;height:1.5px;background:#fff;"></div>
<div class="a" style="left:987px;top:872px;width:275px;height:1.5px;background:#fff;"></div>
<div class="a" style="left:987px;top:892px;width:275px;height:1.5px;background:#fff;"></div>
<div class="a" style="left:987px;top:912px;width:275px;height:1.5px;background:#fff;"></div>
<div class="a" style="left:987px;top:932px;width:275px;height:1.5px;background:#fff;"></div>
<div class="a" style="left:987px;top:952px;width:275px;height:1.5px;background:#fff;"></div>
<div class="a" style="left:987px;top:972px;width:275px;height:1.5px;background:#fff;"></div>
<span class="t" style="left:989.5px;top:474.5px;font-size:13px;line-height:17px;color:#000;transform:scaleX(0.9404);transform-origin:0 50%;">Lef</span>
<div class="a" style="left:1007px;top:397px;width:406px;height:530.5px;background:#ebebeb;overflow:hidden;">
<div class="a" style="left:5px;top:8.5px;width:401px;height:1px;background:#111;"></div>
<div class="a" style="left:5px;top:20px;width:410px;height:39.5px;background:#fff;border:1px solid #d2d2d2;"></div>
<svg class="a" style="left:35.5px;top:29.5px" width="21" height="21" viewBox="0 0 24 24"><path d="M9.75 3.60 L9.81 0.20 L14.19 0.20 L14.25 3.60 L16.35 4.47 L18.80 2.11 L21.89 5.20 L19.53 7.65 L20.40 9.75 L23.80 9.81 L23.80 14.19 L20.40 14.25 L19.53 16.35 L21.89 18.80 L18.80 21.89 L16.35 19.53 L14.25 20.40 L14.19 23.80 L9.81 23.80 L9.75 20.40 L7.65 19.53 L5.20 21.89 L2.11 18.80 L4.47 16.35 L3.60 14.25 L0.20 14.19 L0.20 9.81 L3.60 9.75 L4.47 7.65 L2.11 5.20 L5.20 2.11 L7.65 4.47Z M12 8.1 a3.9 3.9 0 1 0 0.01 0z" fill="#7b0ea0" fill-rule="evenodd"/></svg>
<span class="t" style="left:87px;top:29.0px;font-size:16px;line-height:21px;color:#2e4fa5;transform:scaleX(1.0277);transform-origin:0 50%;">ACC - Accident Ins</span>
<span class="t" style="left:393px;top:29.5px;font-size:15px;line-height:20px;color:#111;transform:translateX(-100%) scaleX(1.0958);transform-origin:100% 50%;">6.39</span>
<div class="a" style="left:5px;top:72px;width:410px;height:39.5px;background:#fff;border:1px solid #d2d2d2;"></div>
<svg class="a" style="left:35.5px;top:81.5px" width="21" height="21" viewBox="0 0 24 24"><path d="M9.75 3.60 L9.81 0.20 L14.19 0.20 L14.25 3.60 L16.35 4.47 L18.80 2.11 L21.89 5.20 L19.53 7.65 L20.40 9.75 L23.80 9.81 L23.80 14.19 L20.40 14.25 L19.53 16.35 L21.89 18.80 L18.80 21.89 L16.35 19.53 L14.25 20.40 L14.19 23.80 L9.81 23.80 L9.75 20.40 L7.65 19.53 L5.20 21.89 L2.11 18.80 L4.47 16.35 L3.60 14.25 L0.20 14.19 L0.20 9.81 L3.60 9.75 L4.47 7.65 L2.11 5.20 L5.20 2.11 L7.65 4.47Z M12 8.1 a3.9 3.9 0 1 0 0.01 0z" fill="#7b0ea0" fill-rule="evenodd"/></svg>
<span class="t" style="left:87px;top:81.0px;font-size:16px;line-height:21px;color:#2e4fa5;transform:scaleX(0.9641);transform-origin:0 50%;">CRE - CRITICAL ILL EE</span>
<span class="t" style="left:393px;top:81.5px;font-size:15px;line-height:20px;color:#111;transform:translateX(-100%) scaleX(1.0121);transform-origin:100% 50%;">44.19</span>
<div class="a" style="left:5px;top:124px;width:410px;height:39.5px;background:#fff;border:1px solid #d2d2d2;"></div>
<svg class="a" style="left:35.5px;top:133.5px" width="21" height="21" viewBox="0 0 24 24"><path d="M9.75 3.60 L9.81 0.20 L14.19 0.20 L14.25 3.60 L16.35 4.47 L18.80 2.11 L21.89 5.20 L19.53 7.65 L20.40 9.75 L23.80 9.81 L23.80 14.19 L20.40 14.25 L19.53 16.35 L21.89 18.80 L18.80 21.89 L16.35 19.53 L14.25 20.40 L14.19 23.80 L9.81 23.80 L9.75 20.40 L7.65 19.53 L5.20 21.89 L2.11 18.80 L4.47 16.35 L3.60 14.25 L0.20 14.19 L0.20 9.81 L3.60 9.75 L4.47 7.65 L2.11 5.20 L5.20 2.11 L7.65 4.47Z M12 8.1 a3.9 3.9 0 1 0 0.01 0z" fill="#7b0ea0" fill-rule="evenodd"/></svg>
<span class="t" style="left:87px;top:133.0px;font-size:16px;line-height:21px;color:#2e4fa5;transform:scaleX(0.9594);transform-origin:0 50%;">DEN - DEN PRE TAX</span>
<span class="t" style="left:393px;top:133.5px;font-size:15px;line-height:20px;color:#111;transform:translateX(-100%) scaleX(1.0121);transform-origin:100% 50%;">22.41</span>
<div class="a" style="left:5px;top:176px;width:410px;height:39.5px;background:#fff;border:1px solid #d2d2d2;"></div>
<svg class="a" style="left:33.5px;top:185.5px" width="21" height="21" viewBox="0 0 24 24"><path d="M9.75 3.60 L9.81 0.20 L14.19 0.20 L14.25 3.60 L16.35 4.47 L18.80 2.11 L21.89 5.20 L19.53 7.65 L20.40 9.75 L23.80 9.81 L23.80 14.19 L20.40 14.25 L19.53 16.35 L21.89 18.80 L18.80 21.89 L16.35 19.53 L14.25 20.40 L14.19 23.80 L9.81 23.80 L9.75 20.40 L7.65 19.53 L5.20 21.89 L2.11 18.80 L4.47 16.35 L3.60 14.25 L0.20 14.19 L0.20 9.81 L3.60 9.75 L4.47 7.65 L2.11 5.20 L5.20 2.11 L7.65 4.47Z M12 8.1 a3.9 3.9 0 1 0 0.01 0z" fill="#7b0ea0" fill-rule="evenodd"/></svg>
<span class="t" style="left:83px;top:185.0px;font-size:16px;line-height:21px;color:#2e4fa5;transform:scaleX(0.9499);transform-origin:0 50%;">FSA - FLEXIBLE SPENDI</span>
<span class="t" style="left:382.5px;top:185.5px;font-size:15px;line-height:20px;color:#111;transform:translateX(-100%) scaleX(1.0242);transform-origin:100% 50%;">130.77</span>
<div class="a" style="left:5px;top:228px;width:410px;height:39.5px;background:#fff;border:1px solid #d2d2d2;"></div>
<svg class="a" style="left:35.5px;top:237.5px" width="21" height="21" viewBox="0 0 24 24"><path d="M9.75 3.60 L9.81 0.20 L14.19 0.20 L14.25 3.60 L16.35 4.47 L18.80 2.11 L21.89 5.20 L19.53 7.65 L20.40 9.75 L23.80 9.81 L23.80 14.19 L20.40 14.25 L19.53 16.35 L21.89 18.80 L18.80 21.89 L16.35 19.53 L14.25 20.40 L14.19 23.80 L9.81 23.80 L9.75 20.40 L7.65 19.53 L5.20 21.89 L2.11 18.80 L4.47 16.35 L3.60 14.25 L0.20 14.19 L0.20 9.81 L3.60 9.75 L4.47 7.65 L2.11 5.20 L5.20 2.11 L7.65 4.47Z M12 8.1 a3.9 3.9 0 1 0 0.01 0z" fill="#7b0ea0" fill-rule="evenodd"/></svg>
<span class="t" style="left:87px;top:237.0px;font-size:16px;line-height:21px;color:#2e4fa5;transform:scaleX(0.9588);transform-origin:0 50%;">LIF - LifeEE</span>
<span class="t" style="left:393px;top:237.5px;font-size:15px;line-height:20px;color:#111;transform:translateX(-100%) scaleX(0.9588);transform-origin:100% 50%;">17.42</span>
<div class="a" style="left:5px;top:280px;width:410px;height:39.5px;background:#fff;border:1px solid #d2d2d2;"></div>
<svg class="a" style="left:35.5px;top:289.5px" width="21" height="21" viewBox="0 0 24 24"><path d="M9.75 3.60 L9.81 0.20 L14.19 0.20 L14.25 3.60 L16.35 4.47 L18.80 2.11 L21.89 5.20 L19.53 7.65 L20.40 9.75 L23.80 9.81 L23.80 14.19 L20.40 14.25 L19.53 16.35 L21.89 18.80 L18.80 21.89 L16.35 19.53 L14.25 20.40 L14.19 23.80 L9.81 23.80 L9.75 20.40 L7.65 19.53 L5.20 21.89 L2.11 18.80 L4.47 16.35 L3.60 14.25 L0.20 14.19 L0.20 9.81 L3.60 9.75 L4.47 7.65 L2.11 5.20 L5.20 2.11 L7.65 4.47Z M12 8.1 a3.9 3.9 0 1 0 0.01 0z" fill="#7b0ea0" fill-rule="evenodd"/></svg>
<span class="t" style="left:87px;top:289.0px;font-size:16px;line-height:21px;color:#2e4fa5;transform:scaleX(0.9722);transform-origin:0 50%;">LIS - LifeSP</span>
<span class="t" style="left:393px;top:289.5px;font-size:15px;line-height:20px;color:#111;transform:translateX(-100%) scaleX(1.0958);transform-origin:100% 50%;">5.28</span>
<div class="a" style="left:5px;top:332px;width:410px;height:39.5px;background:#fff;border:1px solid #d2d2d2;"></div>
<svg class="a" style="left:35.5px;top:341.5px" width="21" height="21" viewBox="0 0 24 24"><path d="M9.75 3.60 L9.81 0.20 L14.19 0.20 L14.25 3.60 L16.35 4.47 L18.80 2.11 L21.89 5.20 L19.53 7.65 L20.40 9.75 L23.80 9.81 L23.80 14.19 L20.40 14.25 L19.53 16.35 L21.89 18.80 L18.80 21.89 L16.35 19.53 L14.25 20.40 L14.19 23.80 L9.81 23.80 L9.75 20.40 L7.65 19.53 L5.20 21.89 L2.11 18.80 L4.47 16.35 L3.60 14.25 L0.20 14.19 L0.20 9.81 L3.60 9.75 L4.47 7.65 L2.11 5.20 L5.20 2.11 L7.65 4.47Z M12 8.1 a3.9 3.9 0 1 0 0.01 0z" fill="#7b0ea0" fill-rule="evenodd"/></svg>
<span class="t" style="left:87px;top:341.0px;font-size:16px;line-height:21px;color:#2e4fa5;transform:scaleX(0.9723);transform-origin:0 50%;">LTD - LTD Post Tax</span>
<span class="t" style="left:393px;top:341.5px;font-size:15px;line-height:20px;color:#111;transform:translateX(-100%) scaleX(1.1053);transform-origin:100% 50%;">22.38</span>
<div class="a" style="left:5px;top:384px;width:410px;height:39.5px;background:#fff;border:1px solid #d2d2d2;"></div>
<svg class="a" style="left:35.5px;top:393.5px" width="21" height="21" viewBox="0 0 24 24"><path d="M9.75 3.60 L9.81 0.20 L14.19 0.20 L14.25 3.60 L16.35 4.47 L18.80 2.11 L21.89 5.20 L19.53 7.65 L20.40 9.75 L23.80 9.81 L23.80 14.19 L20.40 14.25 L19.53 16.35 L21.89 18.80 L18.80 21.89 L16.35 19.53 L14.25 20.40 L14.19 23.80 L9.81 23.80 L9.75 20.40 L7.65 19.53 L5.20 21.89 L2.11 18.80 L4.47 16.35 L3.60 14.25 L0.20 14.19 L0.20 9.81 L3.60 9.75 L4.47 7.65 L2.11 5.20 L5.20 2.11 L7.65 4.47Z M12 8.1 a3.9 3.9 0 1 0 0.01 0z" fill="#7b0ea0" fill-rule="evenodd"/></svg>
<span class="t" style="left:87px;top:393.0px;font-size:16px;line-height:21px;color:#2e4fa5;transform:scaleX(1.0071);transform-origin:0 50%;">MED - Health Insuranc</span>
<span class="t" style="left:393px;top:393.5px;font-size:15px;line-height:20px;color:#111;transform:translateX(-100%) scaleX(0.9370);transform-origin:100% 50%;">131.67</span>
<div class="a" style="left:5px;top:436px;width:410px;height:39.5px;background:#fff;border:1px solid #d2d2d2;"></div>
<svg class="a" style="left:35.5px;top:445.5px" width="21" height="21" viewBox="0 0 24 24"><path d="M9.75 3.60 L9.81 0.20 L14.19 0.20 L14.25 3.60 L16.35 4.47 L18.80 2.11 L21.89 5.20 L19.53 7.65 L20.40 9.75 L23.80 9.81 L23.80 14.19 L20.40 14.25 L19.53 16.35 L21.89 18.80 L18.80 21.89 L16.35 19.53 L14.25 20.40 L14.19 23.80 L9.81 23.80 L9.75 20.40 L7.65 19.53 L5.20 21.89 L2.11 18.80 L4.47 16.35 L3.60 14.25 L0.20 14.19 L0.20 9.81 L3.60 9.75 L4.47 7.65 L2.11 5.20 L5.20 2.11 L7.65 4.47Z M12 8.1 a3.9 3.9 0 1 0 0.01 0z" fill="#7b0ea0" fill-rule="evenodd"/></svg>
<span class="t" style="left:87px;top:445.0px;font-size:16px;line-height:21px;color:#2e4fa5;transform:scaleX(0.9671);transform-origin:0 50%;">STD - STD Post Tax</span>
<span class="t" style="left:393px;top:445.5px;font-size:15px;line-height:20px;color:#111;transform:translateX(-100%) scaleX(1.1053);transform-origin:100% 50%;">23.26</span>
<div class="a" style="left:5px;top:488px;width:410px;height:39.5px;background:#fff;border:1px solid #d2d2d2;"></div>
<svg class="a" style="left:35.5px;top:497.5px" width="21" height="21" viewBox="0 0 24 24"><path d="M9.75 3.60 L9.81 0.20 L14.19 0.20 L14.25 3.60 L16.35 4.47 L18.80 2.11 L21.89 5.20 L19.53 7.65 L20.40 9.75 L23.80 9.81 L23.80 14.19 L20.40 14.25 L19.53 16.35 L21.89 18.80 L18.80 21.89 L16.35 19.53 L14.25 20.40 L14.19 23.80 L9.81 23.80 L9.75 20.40 L7.65 19.53 L5.20 21.89 L2.11 18.80 L4.47 16.35 L3.60 14.25 L0.20 14.19 L0.20 9.81 L3.60 9.75 L4.47 7.65 L2.11 5.20 L5.20 2.11 L7.65 4.47Z M12 8.1 a3.9 3.9 0 1 0 0.01 0z" fill="#7b0ea0" fill-rule="evenodd"/></svg>
<span class="t" style="left:87px;top:497.0px;font-size:16px;line-height:21px;color:#2e4fa5;transform:scaleX(0.9681);transform-origin:0 50%;">VIS - Vis Pre Tax</span>
<span class="t" style="left:393px;top:497.5px;font-size:15px;line-height:20px;color:#111;transform:translateX(-100%) scaleX(1.0787);transform-origin:100% 50%;">6.76</span>
</div>
<span class="t" style="left:1641.5px;top:443.5px;font-size:14.5px;line-height:19px;color:#000;transform:translateX(-100%) scaleX(0.8854);transform-origin:100% 50%;">6.39</span>
<span class="t" style="left:1708.5px;top:443.5px;font-size:14.5px;line-height:19px;color:#000;font-weight:700;transform:translateX(-100%) scaleX(0.8816);transform-origin:100% 50%;">19.17</span>
<span class="t" style="left:1641.5px;top:473.5px;font-size:14.5px;line-height:19px;color:#000;transform:translateX(-100%) scaleX(0.8816);transform-origin:100% 50%;">44.19</span>
<span class="t" style="left:1708.5px;top:473.5px;font-size:14.5px;line-height:19px;color:#000;font-weight:700;transform:translateX(-100%) scaleX(0.8679);transform-origin:100% 50%;">132.57</span>
<span class="t" style="left:1641.5px;top:493.5px;font-size:14.5px;line-height:19px;color:#000;transform:translateX(-100%) scaleX(0.8816);transform-origin:100% 50%;">22.41</span>
<span class="t" style="left:1708.5px;top:493.5px;font-size:14.5px;line-height:19px;color:#000;font-weight:700;transform:translateX(-100%) scaleX(0.8816);transform-origin:100% 50%;">67.23</span>
<span class="t" style="left:1641.5px;top:523.5px;font-size:14.5px;line-height:19px;color:#000;transform:translateX(-100%) scaleX(0.8816);transform-origin:100% 50%;">17.42</span>
<span class="t" style="left:1708.5px;top:523.5px;font-size:14.5px;line-height:19px;color:#000;font-weight:700;transform:translateX(-100%) scaleX(0.8816);transform-origin:100% 50%;">52.26</span>
<span class="t" style="left:1641.5px;top:563.5px;font-size:14.5px;line-height:19px;color:#000;transform:translateX(-100%) scaleX(0.8854);transform-origin:100% 50%;">5.28</span>
<span class="t" style="left:1708.5px;top:563.5px;font-size:14.5px;line-height:19px;color:#000;font-weight:700;transform:translateX(-100%) scaleX(0.8816);transform-origin:100% 50%;">15.84</span>
<span class="t" style="left:1641.5px;top:593.5px;font-size:14.5px;line-height:19px;color:#000;transform:translateX(-100%) scaleX(0.8816);transform-origin:100% 50%;">22.38</span>
<span class="t" style="left:1708.5px;top:593.5px;font-size:14.5px;line-height:19px;color:#000;font-weight:700;transform:translateX(-100%) scaleX(0.8816);transform-origin:100% 50%;">67.14</span>
<span class="t" style="left:1641.5px;top:613.5px;font-size:14.5px;line-height:19px;color:#000;transform:translateX(-100%) scaleX(0.8679);transform-origin:100% 50%;">131.67</span>
<span class="t" style="left:1708.5px;top:613.5px;font-size:14.5px;line-height:19px;color:#000;font-weight:700;transform:translateX(-100%) scaleX(0.8679);transform-origin:100% 50%;">395.01</span>
<span class="t" style="left:1641.5px;top:633.5px;font-size:14.5px;line-height:19px;color:#000;transform:translateX(-100%) scaleX(0.8816);transform-origin:100% 50%;">23.26</span>
<span class="t" style="left:1708.5px;top:633.5px;font-size:14.5px;line-height:19px;color:#000;font-weight:700;transform:translateX(-100%) scaleX(0.8816);transform-origin:100% 50%;">69.78</span>
<span class="t" style="left:1641.5px;top:653.5px;font-size:14.5px;line-height:19px;color:#000;transform:translateX(-100%) scaleX(0.8854);transform-origin:100% 50%;">6.76</span>
<span class="t" style="left:1708.5px;top:653.5px;font-size:14.5px;line-height:19px;color:#000;font-weight:700;transform:translateX(-100%) scaleX(0.8816);transform-origin:100% 50%;">20.28</span>
<span class="t" style="left:1641.5px;top:673.5px;font-size:14.5px;line-height:19px;color:#000;transform:translateX(-100%) scaleX(0.8679);transform-origin:100% 50%;">279.76</span>
<span class="t" style="left:1708.5px;top:673.5px;font-size:14.5px;line-height:19px;color:#000;font-weight:700;transform:translateX(-100%) scaleX(0.8679);transform-origin:100% 50%;">839.28</span>
<div class="a" style="left:1897.5px;top:250px;width:22.5px;height:727px;background:#f5f5f5;border-left:1px solid #e6e6e6;"></div>
<svg class="a" style="left:1903.5px;top:255px;" width="9" height="6" viewBox="0 0 9 6"><path d="M4.5 0.3 L8.8 5.7 H0.2Z" fill="#7a7a7a"/></svg>
<div class="a" style="left:1904px;top:280.5px;width:9px;height:17px;background:#6e6e6e;border-radius:4.5px;"></div>
<svg class="a" style="left:1903.5px;top:968px;" width="9" height="6" viewBox="0 0 9 6"><path d="M4.5 5.7 L8.8 0.3 H0.2Z" fill="#7a7a7a"/></svg>
<div class="a" style="left:961px;top:977px;width:959px;height:31px;background:#f0f0f0;"></div>
<svg class="a" style="left:989px;top:988px;" width="7" height="10" viewBox="0 0 7 10"><path d="M6 0.7 L1 5 L6 9.3" stroke="#b5b5b5" stroke-width="1.2" fill="none"/></svg>
<svg class="a" style="left:1022px;top:988px;" width="7" height="10" viewBox="0 0 7 10"><path d="M1 0.7 L6 5 L1 9.3" stroke="#333" stroke-width="1.2" fill="none"/></svg>
<div class="a" style="left:1322px;top:976px;width:82.5px;height:29px;background:#fff;border-radius:0 0 5px 5px;box-shadow:0 1px 2px rgba(0,0,0,0.15);"></div>
<span class="t" style="left:1087px;top:984.0px;font-size:14px;line-height:18px;color:#333;transform:scaleX(0.9568);transform-origin:0 50%;">CompOne (U4F)</span>
<span class="t" style="left:1213px;top:984.0px;font-size:14px;line-height:18px;color:#333;transform:scaleX(0.9281);transform-origin:0 50%;">FDI (NR2-TXU)</span>
<span class="t" style="left:1422px;top:984.0px;font-size:14px;line-height:18px;color:#333;transform:scaleX(0.8810);transform-origin:0 50%;">IME (FJV)</span>
<span class="t" style="left:1506px;top:984.0px;font-size:14px;line-height:18px;color:#333;transform:scaleX(0.9162);transform-origin:0 50%;">MAI (RPC)</span>
<span class="t" style="left:1596px;top:984.0px;font-size:14px;line-height:18px;color:#333;transform:scaleX(0.8970);transform-origin:0 50%;">MAI (RES)</span>
<span class="t" style="left:1685px;top:984.0px;font-size:14px;line-height:18px;color:#333;transform:scaleX(0.7556);transform-origin:0 50%;">Ri</span>
<span class="t" style="left:1330px;top:981.5px;font-size:14px;line-height:18px;color:#111;transform:scaleX(0.9979);transform-origin:0 50%;">HAA (6Y7)</span>
<div class="a" style="left:1330px;top:1000.5px;width:66px;height:2px;background:#107c41;"></div>
<div class="a" style="left:1199px;top:984px;width:1px;height:17px;background:#d6d6d6;"></div>
<div class="a" style="left:1317.5px;top:984px;width:1px;height:17px;background:#d6d6d6;"></div>
<div class="a" style="left:1408.5px;top:984px;width:1px;height:17px;background:#d6d6d6;"></div>
<div class="a" style="left:1492.5px;top:984px;width:1px;height:17px;background:#d6d6d6;"></div>
<div class="a" style="left:1582.5px;top:984px;width:1px;height:17px;background:#d6d6d6;"></div>
<div class="a" style="left:1670.5px;top:984px;width:1px;height:17px;background:#d6d6d6;"></div>
<svg class="a" style="left:1705px;top:990.5px;" width="12" height="4" viewBox="0 0 12 4"><circle cx="1.5" cy="2" r="1.3" fill="#333"/><circle cx="6" cy="2" r="1.3" fill="#333"/><circle cx="10.5" cy="2" r="1.3" fill="#333"/></svg>
<svg class="a" style="left:1737px;top:987px;" width="11" height="11" viewBox="0 0 11 11"><path d="M5.5 0 V11 M0 5.5 H11" stroke="#333" stroke-width="1.1"/></svg>
<svg class="a" style="left:1773.5px;top:987px;" width="3" height="12" viewBox="0 0 3 12"><circle cx="1.5" cy="1.5" r="1" fill="#333"/><circle cx="1.5" cy="6" r="1" fill="#333"/><circle cx="1.5" cy="10.5" r="1" fill="#333"/></svg>
<div class="a" style="left:1791px;top:983px;width:105px;height:18px;background:#f5f5f5;border-radius:9px;"></div>
<svg class="a" style="left:1796px;top:988px;" width="7" height="9" viewBox="0 0 7 9"><path d="M6.5 0.3 L0.5 4.5 L6.5 8.7Z" fill="#6e6e6e"/></svg>
<div class="a" style="left:1851px;top:988px;width:29px;height:9px;background:#6e6e6e;border-radius:4.5px;"></div>
<svg class="a" style="left:1885.5px;top:988px;" width="7" height="9" viewBox="0 0 7 9"><path d="M0.5 0.3 L6.5 4.5 L0.5 8.7Z" fill="#6e6e6e"/></svg>
<div class="a" style="left:961px;top:1008px;width:959px;height:23px;background:#f3f3f3;"></div>
<span class="t" style="left:973px;top:1012.5px;font-size:11.5px;line-height:15px;color:#333;transform:scaleX(0.9323);transform-origin:0 50%;">Ready</span>
<span class="t" style="left:1019px;top:1013.0px;font-size:11.5px;line-height:15px;color:#333;transform:scaleX(1.0168);transform-origin:0 50%;">Filter Mode</span>
<svg class="a" style="left:1098px;top:1014px;" width="14" height="12" viewBox="0 0 14 12"><rect x="0.5" y="0.5" width="13" height="11" rx="1" fill="none" stroke="#333" stroke-width="1"/><path d="M0.5 3 H13.5 M2.5 5.5 H6 M2.5 8 H6" stroke="#333" stroke-width="1"/><circle cx="10" cy="8" r="2.6" fill="#f3f3f3" stroke="#333" stroke-width="1"/><circle cx="10" cy="8" r="1" fill="#333"/></svg>
<svg class="a" style="left:1130px;top:1013px;" width="14" height="14" viewBox="0 0 14 14"><circle cx="7" cy="2" r="1.4" fill="none" stroke="#333" stroke-width="1"/><path d="M1 4.5 L5 5.5 H9 L13 4.5 M5 5.5 V9 L3 13.5 M9 5.5 V9 L11 13.5 M5 9 H9" fill="none" stroke="#333" stroke-width="1"/><path d="M7.5 9.5 L12.5 13.5 M12.5 9.5 L7.5 13.5" stroke="#333" stroke-width="1"/></svg>
<span class="t" style="left:1148px;top:1012.5px;font-size:11.5px;line-height:15px;color:#222;font-weight:700;transform:scaleX(0.9169);transform-origin:0 50%;">Accessibility: Investigate</span>
<div class="a" style="left:1608px;top:1010px;width:40px;height:21px;background:#e0e0e0;"></div>
<svg class="a" style="left:1621px;top:1014px;" width="13" height="12" viewBox="0 0 13 12"><rect x="0.5" y="0.5" width="12" height="11" fill="none" stroke="#222" stroke-width="1"/><path d="M4.5 0.5 V11.5 M8.5 0.5 V11.5 M0.5 4.2 H12.5 M0.5 7.8 H12.5" stroke="#222" stroke-width="1"/></svg>
<svg class="a" style="left:1661px;top:1014px;" width="14" height="12" viewBox="0 0 14 12"><rect x="0.5" y="0.5" width="13" height="11" fill="none" stroke="#222" stroke-width="1"/><rect x="3.5" y="2.5" width="7" height="7" fill="none" stroke="#222" stroke-width="1"/><path d="M5 4.8 H9 M5 7 H9" stroke="#222" stroke-width="0.9"/></svg>
<svg class="a" style="left:1701px;top:1013px;" width="14" height="13" viewBox="0 0 14 13"><rect x="0.5" y="0.5" width="13" height="12" fill="none" stroke="#222" stroke-width="1"/><path d="M4.5 0.5 V7 H9.5 V0.5" fill="none" stroke="#222" stroke-width="1"/></svg>
<div class="a" style="left:1734px;top:1019.5px;width:8px;height:1px;background:#333;"></div>
<div class="a" style="left:1747px;top:1020px;width:100px;height:1px;background:#8a8a8a;"></div>
<div class="a" style="left:1795.5px;top:1015px;width:4px;height:11px;background:#666;"></div>
<svg class="a" style="left:1852px;top:1016px;" width="8" height="8" viewBox="0 0 8 8"><path d="M4 0 V8 M0 4 H8" stroke="#333" stroke-width="1"/></svg>
<span class="t" style="left:1874px;top:1013.0px;font-size:11.5px;line-height:15px;color:#333;transform:scaleX(0.8667);transform-origin:0 50%;">100%</span>
<div class="a" style="left:959px;top:0px;width:2px;height:1032px;background:#6a6a6a;"></div>
<div class="a" style="left:960px;top:0px;width:960px;height:1px;background:#8a8a8a;"></div>
<div class="a" style="left:1919px;top:0px;width:1px;height:1032px;background:#8a8a8a;"></div>
<div class="a" style="left:960px;top:1031px;width:960px;height:1px;background:#555;"></div>
<div class="a" style="left:0px;top:1032px;width:1920px;height:48px;background:#eeeeee;"></div>
<div class="a" style="left:0px;top:1032px;width:1920px;height:1px;background:#dcdcdc;"></div>
<svg class="a" style="left:18px;top:1046px;" width="27" height="21" viewBox="0 0 27 21"><defs><linearGradient id="cl" x1="0" y1="0" x2="0" y2="1"><stop offset="0" stop-color="#ffffff"/><stop offset="0.55" stop-color="#c6d9f7"/><stop offset="1" stop-color="#7fa8ee"/></linearGradient></defs><circle cx="19" cy="8" r="5" fill="#f2952a"/><path d="M5.5 20 a4.8 4.8 0 0 1 0.5 -9.5 a6.5 6.5 0 0 1 11.5 -1 a5.3 5.3 0 0 1 3.5 10.5 Z" fill="url(#cl)" stroke="#8fb1ec" stroke-width="0.7"/></svg>
<div class="a" style="left:30px;top:1038px;width:16px;height:16px;background:#c42b1c;border-radius:8px;"></div>
<span class="t" style="left:38px;top:1039.0px;font-size:11px;line-height:14px;color:#fff;transform:translateX(-50%);transform-origin:50% 50%;">1</span>
<span class="t" style="left:50.5px;top:1039.5px;font-size:12px;line-height:16px;color:#111;transform:scaleX(0.9221);transform-origin:0 50%;">35&#176;F</span>
<span class="t" style="left:50.5px;top:1056.0px;font-size:12px;line-height:16px;color:#555;transform:scaleX(1.0316);transform-origin:0 50%;">Mostly cloudy</span>
<svg class="a" style="left:572.5px;top:1044.5px;" width="24" height="24" viewBox="0 0 24 24"><defs><linearGradient id="wn" x1="0" y1="0" x2="1" y2="1"><stop offset="0" stop-color="#35c1f1"/><stop offset="1" stop-color="#0a6cd6"/></linearGradient></defs><rect x="0" y="0" width="11.2" height="11.2" fill="url(#wn)"/><rect x="12.6" y="0" width="11.2" height="11.2" fill="url(#wn)"/><rect x="0" y="12.6" width="11.2" height="11.2" fill="url(#wn)"/><rect x="12.6" y="12.6" width="11.2" height="11.2" fill="url(#wn)"/></svg>
<div class="a" style="left:609.5px;top:1040.5px;width:218.5px;height:31px;background:#fafafa;border:1px solid #dedede;border-radius:16px;"></div>
<svg class="a" style="left:620px;top:1048px;" width="16" height="16" viewBox="0 0 16 16"><circle cx="6.8" cy="6.8" r="5.3" fill="none" stroke="#222" stroke-width="1.6"/><path d="M10.6 10.6 L15 15" stroke="#222" stroke-width="1.8" stroke-linecap="round"/></svg>
<span class="t" style="left:646px;top:1047.0px;font-size:14px;line-height:18px;color:#666;transform:scaleX(0.9243);transform-origin:0 50%;">Search</span>
<svg class="a" style="left:840px;top:1044px;" width="24" height="22" viewBox="0 0 24 22"><rect x="9" y="0.5" width="14" height="14" rx="1" fill="#f7f7f7" stroke="#e2e2e2" stroke-width="0.6"/><rect x="4" y="4" width="15" height="14" rx="1" fill="#c4c4c4"/><path d="M0.5 6 H5 V16.5 H16 V21.5 H1.5 Q0.5 21.5 0.5 20.5Z" fill="#222"/></svg>
<svg class="a" style="left:885px;top:1044.5px;" width="25" height="22" viewBox="0 0 25 22"><path d="M0.5 3 Q0.5 1 2.5 1 H8 L10.5 3.5 H22.5 Q24.5 3.5 24.5 5.5 V19.5 Q24.5 21.5 22.5 21.5 H2.5 Q0.5 21.5 0.5 19.5Z" fill="#f7c948"/><path d="M0.5 3 Q0.5 1 2.5 1 H8 L10.5 3.5 H0.5Z" fill="#e9a820"/><path d="M5 21.5 V16 Q5 14.5 6.5 14.5 H18.5 Q20 14.5 20 16 V21.5Z" fill="#2d8de0"/><rect x="8.5" y="17.5" width="8" height="2" rx="1" fill="#1a68c4"/></svg>
<div class="a" style="left:894.0px;top:1072.5px;width:6px;height:2.5px;background:#8a8a8a;border-radius:1.5px;"></div>
<svg class="a" style="left:929px;top:1043.5px;" width="25" height="25" viewBox="0 0 25 25"><defs><linearGradient id="eg" x1="0" y1="0" x2="1" y2="1"><stop offset="0" stop-color="#35c1f1"/><stop offset="0.6" stop-color="#2a9fe0"/><stop offset="1" stop-color="#4fd06a"/></linearGradient></defs><path d="M12.5 0.8 a11.7 11.7 0 0 1 11.7 10 q0 5.5 -6 5.5 q-4 0 -4.5 -2.5 q1.5 -1 1.5 -3 q0 -3.5 -4.5 -3.5 q-5 0 -9.5 5 a11.7 11.7 0 0 1 11.3 -11.5z" fill="url(#eg)"/><path d="M1 12.5 q3 -6 9.5 -6 q-4 2 -4 7.5 q0 6 6.5 9.8 a11.7 11.7 0 0 1 -12 -11.3z" fill="#1673c9"/><path d="M8 14 q0 6 7 9.5 a11.7 11.7 0 0 0 7.5 -5.5 q-3 2 -7 0.5 q-4 -1.5 -4 -5z" fill="#1a8ad6"/><rect x="0.5" y="15.5" width="12" height="8.5" rx="1" fill="#b5651d"/><rect x="0.5" y="15.5" width="12" height="3.5" fill="#d98a36"/><rect x="4" y="13.8" width="5" height="2.2" fill="none" stroke="#8a4a10" stroke-width="0.9"/><rect x="5.5" y="18.2" width="2" height="2" fill="#f7d070"/></svg>
<div class="a" style="left:938.0px;top:1072.5px;width:6px;height:2.5px;background:#8a8a8a;border-radius:1.5px;"></div>
<div class="a" style="left:965px;top:1036px;width:40px;height:39px;background:#f3b1b1;border-radius:5px;"></div>
<div class="a" style="left:969px;top:1072px;width:32px;height:3px;background:#c42b1c;border-radius:1.5px;"></div>
<svg class="a" style="left:972px;top:1044px;" width="26" height="24" viewBox="0 0 26 24"><circle cx="18" cy="6" r="3.3" fill="#7b83eb"/><circle cx="10.5" cy="4.5" r="3.8" fill="#5059c9"/><path d="M14 10 H24 V17 Q24 21 20 21 H14Z" fill="#7b83eb"/><path d="M4 10 H19 V18 Q19 23.5 12 23.5 Q4 23.5 4 18Z" fill="#5b63d3"/><rect x="0.5" y="9" width="11" height="11" rx="1.5" fill="#4b53bc"/><path d="M3.5 12 H8.5 M6 12 V17.5" stroke="#fff" stroke-width="1.6"/></svg>
<div class="a" style="left:986px;top:1037px;width:16px;height:16px;background:#c42b1c;border-radius:8px;"></div>
<span class="t" style="left:994px;top:1038.0px;font-size:11px;line-height:14px;color:#fff;transform:translateX(-50%);transform-origin:50% 50%;">1</span>
<svg class="a" style="left:1017px;top:1044px;" width="26" height="25" viewBox="0 0 26 25"><path d="M2 2.5 L16 1 L19.5 15 L4.5 17Z" fill="#c9d3e6" stroke="#8d97a8" stroke-width="0.8"/><path d="M3.8 4 L14.8 2.8 L17.5 13.5 L5.8 15Z" fill="#1747c9"/><path d="M3.8 4 L9 3.5 L7 15 L5.8 15Z" fill="#4f80f0"/><path d="M9 17 L15 16 L17 20.5 L8.5 21.5Z" fill="#b0b8c8"/><circle cx="19" cy="18.5" r="5.5" fill="#8a8f96" stroke="#d8d8d8" stroke-width="1"/><path d="M16.5 18.5 L18.5 16.8 M16.5 18.5 L18.5 20.2 M21.5 18.5 L19.5 16.8 M21.5 18.5 L19.5 20.2" stroke="#9ef07a" stroke-width="1.1" fill="none"/></svg>
<svg class="a" style="left:1061px;top:1044px;" width="24" height="24" viewBox="0 0 24 24"><circle cx="12" cy="12" r="10.8" fill="#fff" stroke="#1464d2" stroke-width="2.2"/><path d="M17.5 7.5 A7 7 0 1 0 17.5 16.5" fill="none" stroke="#1464d2" stroke-width="3"/><path d="M14 12 H23" stroke="#1464d2" stroke-width="2.6"/></svg>
<div class="a" style="left:1098px;top:1037px;width:37px;height:38px;background:#f9f9f9;border-radius:5px;border:1px solid #e4e4e4;"></div>
<svg class="a" style="left:1105px;top:1044px;" width="24" height="24" viewBox="0 0 24 24"><circle cx="12" cy="12" r="12" fill="#fff"/><path d="M12 12 L1.6 6 A12 12 0 0 1 22.4 6Z" fill="#ea4335"/><path d="M12 12 L22.4 6 A12 12 0 0 1 12 24Z" fill="#fbbc04"/><path d="M12 12 L12 24 A12 12 0 0 1 1.6 6Z" fill="#34a853"/><path d="M12 6 H22.4 A12 12 0 0 1 22.4 6Z" fill="#ea4335"/><circle cx="12" cy="12" r="5.6" fill="#fff"/><circle cx="12" cy="12" r="4.4" fill="#4285f4"/></svg>
<div class="a" style="left:1109px;top:1072px;width:16px;height:3px;background:#1a73e8;border-radius:1.5px;"></div>
<svg class="a" style="left:1148px;top:1042px;" width="30" height="27" viewBox="0 0 30 27"><path d="M8 8 L20 3 L26 8 V20 Q26 22 24 22 H10 Q8 22 8 20Z" fill="#1490df"/><path d="M8 12 L17 18 L26 12 V20 Q26 22 24 22 H10 Q8 22 8 20Z" fill="#28a8ea"/><path d="M14 6 L20 3 L26 8 L17 14Z" fill="#50d9ff"/><rect x="1" y="11" width="11" height="11" rx="1.5" fill="#0f6cbd"/><circle cx="6.5" cy="16.5" r="2.8" fill="none" stroke="#fff" stroke-width="1.6"/><circle cx="22" cy="6.5" r="6" fill="#4cc2ff"/><rect x="18.3" y="4" width="7.4" height="5.2" rx="0.8" fill="none" stroke="#111" stroke-width="0.9"/><path d="M18.5 4.3 L22 7 L25.5 4.3" fill="none" stroke="#111" stroke-width="0.9"/></svg>
<div class="a" style="left:1158.0px;top:1072.5px;width:6px;height:2.5px;background:#8a8a8a;border-radius:1.5px;"></div>
<svg class="a" style="left:1192px;top:1044px;" width="25" height="24" viewBox="0 0 25 24"><rect x="5" y="0.5" width="19" height="22" rx="2.5" fill="#ca64ea"/><rect x="5" y="11" width="19" height="11.5" rx="2.5" fill="#9a33c9"/><rect x="14" y="0.5" width="10" height="8" rx="2" fill="#e8a9f5"/><rect x="0.5" y="9" width="11.5" height="11.5" rx="1.5" fill="#7719aa"/><path d="M3.8 17.5 V12 L8.7 17.5 V12" fill="none" stroke="#fff" stroke-width="1.5"/></svg>
<div class="a" style="left:1201.0px;top:1072.5px;width:6px;height:2.5px;background:#8a8a8a;border-radius:1.5px;"></div>
<svg class="a" style="left:1238.5px;top:1045px;" width="21" height="21" viewBox="0 0 21 21"><rect width="21" height="21" rx="5" fill="#3d0e9e"/><circle cx="10" cy="10" r="4.8" fill="none" stroke="#fff" stroke-width="2.4"/><path d="M12 12 L16 16.5" stroke="#fff" stroke-width="2.4"/><circle cx="5" cy="4.5" r="0.9" fill="#e9b8ff"/><circle cx="16.5" cy="5" r="0.9" fill="#e9b8ff"/><circle cx="4.5" cy="16" r="0.9" fill="#e9b8ff"/></svg>
<div class="a" style="left:1246.0px;top:1072.5px;width:6px;height:2.5px;background:#8a8a8a;border-radius:1.5px;"></div>
<svg class="a" style="left:1281px;top:1044px;" width="24" height="23" viewBox="0 0 24 23"><rect x="6" y="0.5" width="17.5" height="22" rx="2.5" fill="#21a366"/><rect x="6" y="0.5" width="9" height="11" fill="#107c41"/><rect x="15" y="0.5" width="8.5" height="7" rx="2" fill="#5fd68f"/><rect x="6" y="11.5" width="17.5" height="11" rx="2.5" fill="#185c37"/><rect x="15" y="7.5" width="8.5" height="8" fill="#21a366"/><rect x="0.5" y="8.5" width="11.5" height="11.5" rx="1.5" fill="#107c41"/><path d="M3.8 11.5 L8.7 17 M8.7 11.5 L3.8 17" stroke="#fff" stroke-width="1.5"/></svg>
<div class="a" style="left:1289.0px;top:1072.5px;width:6px;height:2.5px;background:#8a8a8a;border-radius:1.5px;"></div>
<svg class="a" style="left:1328px;top:1044px;" width="18" height="24" viewBox="0 0 18 24"><rect x="0.5" y="0.5" width="17" height="23" rx="2" fill="#5d6b7a"/><rect x="2" y="2" width="14" height="5" rx="1" fill="#4cc2ff"/><g fill="#dfe4ea"><rect x="2" y="9" width="4" height="3.5"/><rect x="7" y="9" width="4" height="3.5"/><rect x="12" y="9" width="4" height="3.5"/><rect x="2" y="13.5" width="4" height="3.5"/><rect x="7" y="13.5" width="4" height="3.5"/><rect x="12" y="13.5" width="4" height="3.5"/><rect x="2" y="18" width="4" height="3.5"/><rect x="7" y="18" width="4" height="3.5"/><rect x="12" y="18" width="4" height="3.5"/></g></svg>
<div class="a" style="left:1334.0px;top:1072.5px;width:6px;height:2.5px;background:#8a8a8a;border-radius:1.5px;"></div>
<svg class="a" style="left:1699.5px;top:1052px;" width="11" height="7" viewBox="0 0 11 7"><path d="M0.7 6 L5.5 1 L10.3 6" stroke="#111" stroke-width="1.4" fill="none"/></svg>
<svg class="a" style="left:1731px;top:1048px;" width="12" height="17" viewBox="0 0 12 17"><rect x="3.5" y="0.7" width="5" height="9.5" rx="2.5" fill="none" stroke="#1a5fc4" stroke-width="1.2"/><path d="M0.8 7.5 a5.2 5.2 0 0 0 10.4 0" fill="none" stroke="#1a5fc4" stroke-width="1.2"/><path d="M6 12.8 V16.3" stroke="#1a5fc4" stroke-width="1.2"/></svg>
<svg class="a" style="left:1761px;top:1050px;" width="16" height="13" viewBox="0 0 16 13"><path d="M0.8 4.8 A10.5 10.5 0 0 1 15.2 4.8" fill="none" stroke="#111" stroke-width="1.2"/><path d="M3 7.3 A7.2 7.2 0 0 1 13 7.3" fill="none" stroke="#111" stroke-width="1.2"/><path d="M5.2 9.7 A4 4 0 0 1 10.8 9.7" fill="none" stroke="#111" stroke-width="1.2"/><circle cx="8" cy="11.8" r="1.1" fill="#111"/></svg>
<svg class="a" style="left:1785px;top:1050px;" width="17" height="13" viewBox="0 0 17 13"><path d="M0.7 4.5 H3.5 L7 1 V12 L3.5 8.5 H0.7Z" fill="none" stroke="#111" stroke-width="1.1"/><path d="M9.5 4 Q11 6.5 9.5 9 M11.8 2.5 Q14 6.5 11.8 10.5 M14 1 Q17 6.5 14 12" fill="none" stroke="#111" stroke-width="1.1"/></svg>
<svg class="a" style="left:1809px;top:1049px;" width="21" height="14" viewBox="0 0 21 14"><rect x="0.7" y="3.5" width="17.6" height="9.5" rx="2.2" fill="#158a1f" stroke="#111" stroke-width="1.2"/><path d="M19.3 6.3 V10.2" stroke="#111" stroke-width="1.6" stroke-linecap="round"/><path d="M10.5 0 L6.5 7 H9.5 L8.5 12 L13 5.5 H10 Z" fill="#111" stroke="#eee" stroke-width="0.5"/></svg>
<span class="t" style="left:1900px;top:1040.0px;font-size:12px;line-height:16px;color:#111;transform:translateX(-100%) scaleX(1.0038);transform-origin:100% 50%;">11:22 AM</span>
<span class="t" style="left:1900px;top:1056.0px;font-size:12px;line-height:16px;color:#111;transform:translateX(-100%) scaleX(1.0301);transform-origin:100% 50%;">3/24/2026</span>
</body></html>
